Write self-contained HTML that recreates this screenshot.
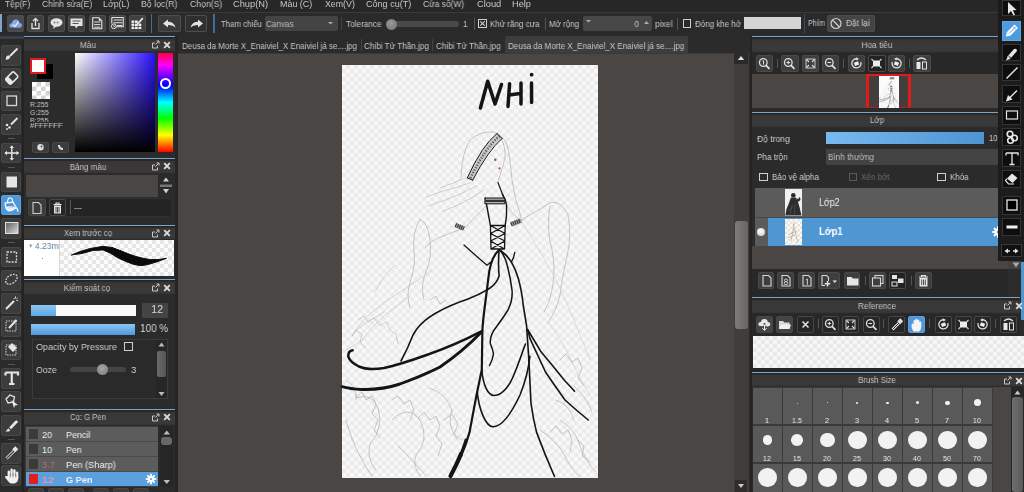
<!DOCTYPE html><html><head><meta charset="utf-8"><style>
html,body{margin:0;padding:0;width:1024px;height:492px;overflow:hidden;background:#2a2a2a;}
body{position:relative;font-family:"Liberation Sans",sans-serif;}
div{position:absolute;box-sizing:border-box;}
.t{white-space:nowrap;line-height:1;will-change:transform;}
svg{overflow:visible}
</style></head><body>
<div style="left:0px;top:0px;width:1024px;height:12px;background:#272727;"></div>
<div style="left:0px;top:12px;width:1000px;height:1px;background:#3a3a3a;"></div>
<div class="t" style="left:4.5px;top:0.25px;font-size:8.8px;color:#c8c8c8;transform:scaleX(0.9543);transform-origin:left center;">Tệp(F)</div>
<div class="t" style="left:41.6px;top:0.25px;font-size:8.8px;color:#c8c8c8;transform:scaleX(0.9571);transform-origin:left center;">Chỉnh sửa(E)</div>
<div class="t" style="left:103.19999999999999px;top:0.25px;font-size:8.8px;color:#c8c8c8;transform:scaleX(0.9957);transform-origin:left center;">Lớp(L)</div>
<div class="t" style="left:141.1px;top:0.25px;font-size:8.8px;color:#c8c8c8;transform:scaleX(0.9899);transform-origin:left center;">Bộ lọc(R)</div>
<div class="t" style="left:189.6px;top:0.25px;font-size:8.8px;color:#c8c8c8;transform:scaleX(0.9858);transform-origin:left center;">Chọn(S)</div>
<div class="t" style="left:233.4px;top:0.25px;font-size:8.8px;color:#c8c8c8;transform:scaleX(1.0526);transform-origin:left center;">Chụp(N)</div>
<div class="t" style="left:280.20000000000005px;top:0.25px;font-size:8.8px;color:#c8c8c8;transform:scaleX(1.0132);transform-origin:left center;">Màu (C)</div>
<div class="t" style="left:324.6px;top:0.25px;font-size:8.8px;color:#c8c8c8;transform:scaleX(0.9991);transform-origin:left center;">Xem(V)</div>
<div class="t" style="left:366.1px;top:0.25px;font-size:8.8px;color:#c8c8c8;transform:scaleX(1.0295);transform-origin:left center;">Công cụ(T)</div>
<div class="t" style="left:423.20000000000005px;top:0.25px;font-size:8.8px;color:#c8c8c8;transform:scaleX(0.9574);transform-origin:left center;">Cửa sổ(W)</div>
<div class="t" style="left:476.6px;top:0.25px;font-size:8.8px;color:#c8c8c8;transform:scaleX(1.0565);transform-origin:left center;">Cloud</div>
<div class="t" style="left:512.4px;top:0.25px;font-size:8.8px;color:#c8c8c8;transform:scaleX(1.0501);transform-origin:left center;">Help</div>
<div style="left:0px;top:13px;width:1000px;height:23px;background:#2a2a2a;"></div>
<div style="left:0px;top:14px;width:1.8px;height:18px;background:#7ea6cc;"></div>
<div style="left:7px;top:15px;width:17px;height:17px;background:#484a4e;border:1px solid #4e4e4e;border-radius:2px;"></div>
<div style="left:27px;top:15px;width:17px;height:17px;background:#404040;border:1px solid #4e4e4e;border-radius:2px;"></div>
<div style="left:47.5px;top:15px;width:17px;height:17px;background:#404040;border:1px solid #4e4e4e;border-radius:2px;"></div>
<div style="left:68px;top:15px;width:17px;height:17px;background:#404040;border:1px solid #4e4e4e;border-radius:2px;"></div>
<div style="left:88.5px;top:15px;width:17px;height:17px;background:#404040;border:1px solid #4e4e4e;border-radius:2px;"></div>
<div style="left:108.5px;top:15px;width:17px;height:17px;background:#404040;border:1px solid #4e4e4e;border-radius:2px;"></div>
<div style="left:129px;top:15px;width:17px;height:17px;background:#404040;border:1px solid #4e4e4e;border-radius:2px;"></div>
<svg style="position:absolute;left:7px;top:15px;" width="17" height="17" viewBox="0 0 17 17"><path d="M4 12.5 Q2 12.5 2.3 10 Q2.8 8 5 8.3 Q5.5 4.5 9 4.6 Q12.3 4.8 12.5 8 Q15.2 8 15 10.5 Q14.7 12.8 12.5 12.8 Z" fill="#7fa9e6"/><path d="M5.5 9.5 L7.8 11.5 L11.5 7" stroke="#dfe9f5" stroke-width="1.4" fill="none"/></svg>
<svg style="position:absolute;left:27px;top:15px;" width="17" height="17" viewBox="0 0 17 17"><path d="M5 8 V13.5 H12 V8" stroke="#e0e0e0" stroke-width="1.3" fill="none"/><path d="M8.5 11 V3.5 M6 6 L8.5 3.5 L11 6" stroke="#e0e0e0" stroke-width="1.3" fill="none"/></svg>
<svg style="position:absolute;left:47.5px;top:15px;" width="17" height="17" viewBox="0 0 17 17"><ellipse cx="8.5" cy="7.5" rx="6" ry="4.2" fill="#e4e4e4"/><path d="M6 10.5 L5 14 L9 11" fill="#e4e4e4"/><circle cx="6.5" cy="7.5" r="0.9" fill="#777"/><circle cx="9.5" cy="7.5" r="0.9" fill="#777"/></svg>
<svg style="position:absolute;left:68px;top:15px;" width="17" height="17" viewBox="0 0 17 17"><path d="M2.5 3.5 H14.5 V11 H10 L8 13.5 L7 11 H2.5 Z" fill="#e4e4e4"/><path d="M4.5 6 H12.5 M4.5 8.5 H10.5" stroke="#555" stroke-width="1"/></svg>
<svg style="position:absolute;left:88.5px;top:15px;" width="17" height="17" viewBox="0 0 17 17"><path d="M3.7 2.7 H9.8 L12.8 5.7 V13.7 H3.7 Z" fill="none" stroke="#e6e6e6" stroke-width="1.1"/><path d="M9.8 2.7 V5.7 H12.8" fill="#e6e6e6"/><path d="M5.2 7 H11.3 M5.2 9.6 H11.3 M5.2 12.2 H11.3" stroke="#e6e6e6" stroke-width="1"/></svg>
<svg style="position:absolute;left:108.5px;top:15px;" width="17" height="17" viewBox="0 0 17 17"><path d="M2.8 2.5 H14.2 V11.8 H7" fill="none" stroke="#e6e6e6" stroke-width="1.1"/><path d="M2.8 2.5 V8.5" stroke="#e6e6e6" stroke-width="1.1"/><path d="M4.5 5 H13 M4.5 7.8 H13 M8 10.5 H13" stroke="#e6e6e6" stroke-width="1.1"/><circle cx="4.8" cy="11.3" r="2.4" fill="#404040" stroke="#e6e6e6" stroke-width="1"/><path d="M4.8 10 V11.5 H6" stroke="#e6e6e6" stroke-width="0.7" fill="none"/></svg>
<svg style="position:absolute;left:129px;top:15px;" width="17" height="17" viewBox="0 0 17 17"><g fill="#eeeeee"><rect x="2.5" y="5.5" width="2.8" height="2.4"/><rect x="6" y="5.5" width="2.8" height="2.4"/><rect x="2.5" y="8.6" width="2.8" height="2.4"/><rect x="6" y="8.6" width="2.8" height="2.4"/><rect x="9.5" y="8.6" width="2.8" height="2.4"/><rect x="2.5" y="11.7" width="2.8" height="2.4"/><rect x="6" y="11.7" width="2.8" height="2.4"/><rect x="9.5" y="11.7" width="2.8" height="2.4"/></g><path d="M8.5 9 L13.8 3.2" stroke="#e6e6e6" stroke-width="1.8"/><path d="M8.5 9 L7.8 10.3" stroke="#e6e6e6" stroke-width="1"/></svg>
<div style="left:150.5px;top:14px;width:1.5px;height:19px;background:#3d6f9c;"></div>
<div style="left:158px;top:15px;width:22.5px;height:17px;background:#3a3a3a;border:1px solid #4e4e4e;border-radius:2px;"></div>
<div style="left:184.5px;top:15px;width:22.5px;height:17px;background:#2f2f2f;border:1px solid #4e4e4e;border-radius:2px;"></div>
<svg style="position:absolute;left:158px;top:15px;" width="23" height="17" viewBox="0 0 23 17"><path d="M5 8.5 L10 4.5 V6.8 Q16 6.8 17.5 12.5 Q15 9.8 10 10 V12.5 Z" fill="#e2e2e2"/></svg>
<svg style="position:absolute;left:184.5px;top:15px;" width="23" height="17" viewBox="0 0 23 17"><path d="M18 8.5 L13 4.5 V6.8 Q7 6.8 5.5 12.5 Q8 9.8 13 10 V12.5 Z" fill="#e2e2e2"/></svg>
<div style="left:213px;top:14px;width:1.5px;height:19px;background:#3d6f9c;"></div>
<div class="t" style="left:220.6px;top:19.55px;font-size:8.8px;color:#c8c8c8;transform:scaleX(0.8876);transform-origin:left center;">Tham chiếu</div>
<div style="left:265px;top:15.5px;width:72.5px;height:15.5px;background:#444444;border-radius:2px;"></div>
<div class="t" style="left:266.2px;top:19.55px;font-size:8.8px;color:#bdbdbd;transform:scaleX(0.9253);transform-origin:left center;">Canvas</div>
<svg style="position:absolute;left:327px;top:21px;" width="8" height="5" viewBox="0 0 8 5"><path d="M1 1 H6 L3.5 3.5 Z" fill="#aaa"/></svg>
<div style="left:340.5px;top:17px;width:1px;height:13px;background:#444;"></div>
<div class="t" style="left:345.8px;top:19.65px;font-size:8.8px;color:#c8c8c8;transform:scaleX(0.9330);transform-origin:left center;">Tolerance</div>
<div style="left:386px;top:21px;width:73px;height:6px;background:#4a4a4a;border-radius:3px;"></div>
<div style="left:385.5px;top:19px;width:11px;height:11px;border-radius:50%;background:radial-gradient(circle at 45% 40%,#9a9a9a,#6e6e6e);"></div>
<div class="t" style="left:463.2px;top:19.65px;font-size:8.8px;color:#c8c8c8;transform:scaleX(0.9000);transform-origin:left center;">1</div>
<div style="left:473.5px;top:18px;width:1px;height:12px;background:#555;"></div>
<div style="left:477.5px;top:19px;width:9px;height:9px;border:1px solid #cfcfcf;"></div>
<svg style="position:absolute;left:477.5px;top:19px;" width="9" height="9" viewBox="0 0 9 9"><path d="M2.3 2.3 L6.7 6.7 M6.7 2.3 L2.3 6.7" stroke="#cfcfcf" stroke-width="1.1"/></svg>
<div class="t" style="left:490.1px;top:19.55px;font-size:8.8px;color:#c8c8c8;transform:scaleX(0.9111);transform-origin:left center;">Khử răng cưa</div>
<div style="left:544.5px;top:18px;width:1px;height:12px;background:#555;"></div>
<div class="t" style="left:549.3px;top:19.55px;font-size:8.8px;color:#c8c8c8;transform:scaleX(0.9078);transform-origin:left center;">Mở rộng</div>
<div style="left:583px;top:15.5px;width:69px;height:15.5px;background:#474747;border-radius:2px;"></div>
<svg style="position:absolute;left:585px;top:19px;" width="8" height="5" viewBox="0 0 8 5"><path d="M1 1 H6 L3.5 3.5 Z" fill="#aaa"/></svg>
<div class="t" style="left:238.5px;width:400px;text-align:right;top:19.55px;font-size:8.8px;color:#c8c8c8;transform:scaleX(0.9000);transform-origin:right center;">0</div>
<svg style="position:absolute;left:643px;top:20px;" width="8" height="5" viewBox="0 0 8 5"><path d="M1 4 H6 L3.5 1 Z" fill="#aaa"/></svg>
<div class="t" style="left:654.8px;top:19.55px;font-size:8.8px;color:#c8c8c8;transform:scaleX(0.9672);transform-origin:left center;">pixel</div>
<div style="left:677px;top:18px;width:1px;height:12px;background:#555;"></div>
<div style="left:682.5px;top:19px;width:8.5px;height:9px;border:1px solid #cfcfcf;"></div>
<div class="t" style="left:695.3px;top:19.55px;font-size:8.8px;color:#c8c8c8;transform:scaleX(0.9081);transform-origin:left center;">Đóng khe hở</div>
<div style="left:743.5px;top:17px;width:57px;height:12px;background:#d4d4d4;"></div>
<div style="left:803.5px;top:14px;width:1.5px;height:19px;background:#3a4d60;"></div>
<div class="t" style="left:808.4px;top:19.35px;font-size:8.8px;color:#c8c8c8;transform:scaleX(0.8274);transform-origin:left center;">Phím</div>
<div style="left:827px;top:15px;width:48px;height:17px;background:#444444;border:1px solid #4c4c4c;border-radius:2px;"></div>
<svg style="position:absolute;left:829px;top:16px;" width="14" height="14" viewBox="0 0 14 14"><circle cx="7" cy="7.5" r="5" fill="none" stroke="#cfcfcf" stroke-width="1.2"/><path d="M3.5 4 L10.5 11" stroke="#cfcfcf" stroke-width="1.2"/></svg>
<div class="t" style="left:846.2px;top:19.35px;font-size:8.8px;color:#c8c8c8;transform:scaleX(0.9464);transform-origin:left center;">Đặt lại</div>
<div style="left:0px;top:36px;width:23px;height:456px;background:#2a2a2a;"></div>
<div style="left:21.5px;top:36px;width:2.5px;height:456px;background:#232323;"></div>
<div style="left:0px;top:35.5px;width:23.5px;height:3.5px;background:#36404a;"></div>
<div style="left:1px;top:45px;width:20.3px;height:20.5px;background:#3c3c3c;border:1px solid #474747;border-radius:2px;"></div>
<div style="left:1px;top:67.5px;width:20.3px;height:20.5px;background:#3c3c3c;border:1px solid #474747;border-radius:2px;"></div>
<div style="left:1px;top:90.5px;width:20.3px;height:20.5px;background:#3c3c3c;border:1px solid #474747;border-radius:2px;"></div>
<div style="left:1px;top:114px;width:20.3px;height:20.5px;background:#3c3c3c;border:1px solid #474747;border-radius:2px;"></div>
<div style="left:1px;top:142.5px;width:20.3px;height:20.5px;background:#3c3c3c;border:1px solid #474747;border-radius:2px;"></div>
<div style="left:1px;top:171.7px;width:20.3px;height:20.5px;background:#3c3c3c;border:1px solid #474747;border-radius:2px;"></div>
<div style="left:1px;top:194.6px;width:20.3px;height:20.5px;background:#4f97d6;border:1px solid #5aa0dc;border-radius:2px;"></div>
<div style="left:1px;top:218px;width:20.3px;height:20.5px;background:#3c3c3c;border:1px solid #474747;border-radius:2px;"></div>
<div style="left:1px;top:246.5px;width:20.3px;height:20.5px;background:#3c3c3c;border:1px solid #474747;border-radius:2px;"></div>
<div style="left:1px;top:270px;width:20.3px;height:20.5px;background:#3c3c3c;border:1px solid #474747;border-radius:2px;"></div>
<div style="left:1px;top:293px;width:20.3px;height:20.5px;background:#3c3c3c;border:1px solid #474747;border-radius:2px;"></div>
<div style="left:1px;top:316px;width:20.3px;height:20.5px;background:#3c3c3c;border:1px solid #474747;border-radius:2px;"></div>
<div style="left:1px;top:339.5px;width:20.3px;height:20.5px;background:#3c3c3c;border:1px solid #474747;border-radius:2px;"></div>
<div style="left:1px;top:368px;width:20.3px;height:20.5px;background:#3c3c3c;border:1px solid #474747;border-radius:2px;"></div>
<div style="left:1px;top:391.3px;width:20.3px;height:20.5px;background:#3c3c3c;border:1px solid #474747;border-radius:2px;"></div>
<div style="left:1px;top:415px;width:20.3px;height:20.5px;background:#3c3c3c;border:1px solid #474747;border-radius:2px;"></div>
<div style="left:1px;top:443px;width:20.3px;height:20.5px;background:#3c3c3c;border:1px solid #474747;border-radius:2px;"></div>
<div style="left:1px;top:465.4px;width:20.3px;height:20.5px;background:#3c3c3c;border:1px solid #474747;border-radius:2px;"></div>
<div style="left:8px;top:138px;width:7px;height:1px;background:#555;"></div>
<div style="left:8px;top:167px;width:7px;height:1px;background:#555;"></div>
<div style="left:8px;top:241.5px;width:7px;height:1px;background:#555;"></div>
<div style="left:8px;top:364px;width:7px;height:1px;background:#555;"></div>
<div style="left:8px;top:439px;width:7px;height:1px;background:#555;"></div>
<svg style="position:absolute;left:1.7px;top:45px;" width="19" height="20" viewBox="0 0 19 20"><path d="M15.5 3.5 L8 11" stroke="#e6e6e6" stroke-width="1.8"/><path d="M4 13.5 Q4 10 7 10.5 Q9 11.5 7.5 13.5 Q6 15 3.5 14.5 Z" fill="#e6e6e6"/></svg>
<svg style="position:absolute;left:1.7px;top:67.5px;" width="19" height="20" viewBox="0 0 19 20"><g transform="rotate(-45 9.75 10)"><rect x="4" y="6.3" width="11.5" height="7.4" rx="1.5" fill="none" stroke="#e6e6e6" stroke-width="1.5"/><rect x="4" y="6.3" width="4.2" height="7.4" rx="1" fill="#e6e6e6"/></g></svg>
<svg style="position:absolute;left:1.7px;top:90.5px;" width="19" height="20" viewBox="0 0 19 20"><rect x="5" y="5" width="9.5" height="9.5" fill="none" stroke="#d8d8d8" stroke-width="1.3"/></svg>
<svg style="position:absolute;left:1.7px;top:114px;" width="19" height="20" viewBox="0 0 19 20"><path d="M15.5 4 L9 10.5" stroke="#e6e6e6" stroke-width="1.8"/><circle cx="5" cy="11" r="1.3" fill="#e6e6e6"/><circle cx="7.5" cy="13.5" r="1.3" fill="#e6e6e6"/><circle cx="5" cy="15" r="0.9" fill="#e6e6e6"/></svg>
<svg style="position:absolute;left:1.7px;top:142.5px;" width="19" height="20" viewBox="0 0 19 20"><path d="M9.75 3 V17 M3 10 H16.5" stroke="#e6e6e6" stroke-width="1.4"/><path d="M9.75 2.5 L7.5 5 H12 Z M9.75 17.5 L7.5 15 H12 Z M2.5 10 L5 7.8 V12.2 Z M17 10 L14.5 7.8 V12.2 Z" fill="#e6e6e6"/></svg>
<svg style="position:absolute;left:1.7px;top:171.7px;" width="19" height="20" viewBox="0 0 19 20"><rect x="4.5" y="4.5" width="10.5" height="11" fill="#e6e6e6"/></svg>
<svg style="position:absolute;left:1.7px;top:194.6px;" width="19" height="20" viewBox="0 0 19 20"><path d="M5.5 7.5 Q5.5 2.5 8.5 3 Q11 3.5 10.5 7.5" stroke="#f2f8ff" stroke-width="1.2" fill="none"/><path d="M3.2 8 L11 7.2 L14.3 12.8 Q10.5 15.8 6.5 15.8 Q3.3 14.5 3.2 8 Z" fill="none" stroke="#f2f8ff" stroke-width="1.3"/><path d="M3.8 11.8 Q9 10.6 13.6 12.6 Q10.5 15.2 6.5 15.2 Q4 14.2 3.8 11.8 Z" fill="#f2f8ff"/><path d="M6 13.2 Q8.5 12.4 11 12.8" stroke="#f0b0b0" stroke-width="0.8" fill="none"/><path d="M14.3 12.8 Q16.2 14.2 15.6 16.5" stroke="#f2f8ff" stroke-width="1.4" fill="none"/></svg>
<svg style="position:absolute;left:1.7px;top:218px;" width="19" height="20" viewBox="0 0 19 20"><defs><linearGradient id="lg1" x1="0" y1="0" x2="1" y2="1"><stop offset="0" stop-color="#5a5a5a"/><stop offset="1" stop-color="#dcdcdc"/></linearGradient></defs><rect x="3.5" y="4.5" width="12.5" height="11" fill="url(#lg1)" stroke="#e0e0e0" stroke-width="1"/></svg>
<svg style="position:absolute;left:1.7px;top:246.5px;" width="19" height="20" viewBox="0 0 19 20"><rect x="5" y="5" width="9.5" height="10" fill="none" stroke="#d8d8d8" stroke-width="1.3" stroke-dasharray="2 1.2"/></svg>
<svg style="position:absolute;left:1.7px;top:270px;" width="19" height="20" viewBox="0 0 19 20"><path d="M4 13 Q3 8 8 5.5 Q13 3 15 6 Q16 10 11 13 Q7 15.5 4 13 Z" fill="none" stroke="#d8d8d8" stroke-width="1.3" stroke-dasharray="1.8 1.2"/></svg>
<svg style="position:absolute;left:1.7px;top:293px;" width="19" height="20" viewBox="0 0 19 20"><path d="M4 16 L12 8" stroke="#e6e6e6" stroke-width="2"/><path d="M13.5 3.5 V5.5 M15.5 5 L14.3 6 M16 7.5 H14.5 M11.5 5 L12.5 6" stroke="#e6e6e6" stroke-width="1"/></svg>
<svg style="position:absolute;left:1.7px;top:316px;" width="19" height="20" viewBox="0 0 19 20"><rect x="4" y="5" width="10" height="10" fill="none" stroke="#cfcfcf" stroke-width="1" stroke-dasharray="1.5 1"/><path d="M7 12 L14.5 4" stroke="#e6e6e6" stroke-width="2"/></svg>
<svg style="position:absolute;left:1.7px;top:339.5px;" width="19" height="20" viewBox="0 0 19 20"><rect x="4" y="5" width="10" height="10" fill="none" stroke="#cfcfcf" stroke-width="1" stroke-dasharray="1.5 1"/><path d="M10 3 L15 8 L11 12 L6 7 Z" fill="#e6e6e6"/></svg>
<svg style="position:absolute;left:1.7px;top:368px;" width="19" height="20" viewBox="0 0 19 20"><path d="M3.5 4.5 H16 V7.5 M3.5 4.5 V7.5 M9.75 4.5 V16 M7 16 H12.5" stroke="#e6e6e6" stroke-width="2.2" fill="none"/></svg>
<svg style="position:absolute;left:1.7px;top:391.3px;" width="19" height="20" viewBox="0 0 19 20"><path d="M4 8 L8 4 L12.5 6 L11.5 11 L6 12 Z" fill="none" stroke="#e6e6e6" stroke-width="1.3"/><path d="M9.5 9 L16 14 L13 14.5 L12 17 Z" fill="#e6e6e6"/></svg>
<svg style="position:absolute;left:1.7px;top:415px;" width="19" height="20" viewBox="0 0 19 20"><path d="M3.5 16.5 L13 6 Q15.5 4.5 16 7 L7 16.5 Z" fill="#e6e6e6"/><path d="M6.5 12.8 L9.2 15" stroke="#3c3c3c" stroke-width="1.1"/></svg>
<svg style="position:absolute;left:1.7px;top:443px;" width="19" height="20" viewBox="0 0 19 20"><path d="M4.5 15.5 L12 8" stroke="#e6e6e6" stroke-width="3"/><path d="M4.5 15.5 L12 8" stroke="#3c3c3c" stroke-width="1.2"/><path d="M11 5.5 L14 8.5 M12.5 4 L15.5 7" stroke="#e6e6e6" stroke-width="2.2"/></svg>
<svg style="position:absolute;left:1.7px;top:465.4px;" width="19" height="20" viewBox="0 0 19 20"><g fill="#f0f0f0"><rect x="5.6" y="5.5" width="2.4" height="8" rx="1.2"/><rect x="8.4" y="3.6" width="2.4" height="9" rx="1.2"/><rect x="11.2" y="4.2" width="2.4" height="9" rx="1.2"/><rect x="14" y="6.5" width="2.3" height="7" rx="1.15"/><path d="M5.6 11 H16.3 V13.5 Q16 17.5 12.5 18.5 H9.5 Q7 18 5.5 15.5 L2.8 12 Q3.3 10.3 5 11.2 Z"/></g><path d="M8.2 9 V12.5 M11 8 V12.5 M13.8 9 V12.5" stroke="#3c3c3c" stroke-width="0.5"/></svg>
<div style="left:24px;top:36px;width:150.8px;height:456px;background:#2b2b2b;"></div>
<div style="left:174.8px;top:36px;width:3.2px;height:456px;background:#252525;"></div>
<div style="left:24px;top:37px;width:150.8px;height:15px;background:linear-gradient(to bottom,#23262b 0,#23262b 8%,#3d3632 18%,#3b3734 35%,#383a3c 60%,#3a3836 88%,#25252c 100%);"></div>
<div style="left:24px;top:36px;width:150.8px;height:1.2px;background:#7ea3c4;"></div>
<div class="t" style="left:-112.45px;width:400px;text-align:center;top:40.55px;font-size:8.8px;color:#c4c4c4;transform:scaleX(0.9401);transform-origin:center center;">Màu</div>
<svg style="position:absolute;left:151.3px;top:40px;" width="9" height="9" viewBox="0 0 9 9"><path d="M1.5 3 V8 H6.5 V5.5 M1.5 3 H4" stroke="#c8c8c8" stroke-width="1" fill="none"/><path d="M4.5 4.5 L8 1 M5.5 1 H8 V3.5" stroke="#c8c8c8" stroke-width="1" fill="none"/></svg>
<svg style="position:absolute;left:163.3px;top:40.5px;" width="8" height="8" viewBox="0 0 8 8"><path d="M1.2 1.2 L6.8 6.8 M6.8 1.2 L1.2 6.8" stroke="#dcdcdc" stroke-width="1.9"/></svg>
<div style="left:24px;top:52px;width:150.8px;height:105.5px;background:#2b2b2b;"></div>
<div style="left:75px;top:53px;width:80px;height:99px;background:linear-gradient(to bottom,rgba(0,0,0,0),#000),linear-gradient(to right,#fff,#2a12ff);"></div>
<svg style="position:absolute;left:74px;top:52px;" width="8" height="8" viewBox="0 0 8 8"><path d="M1.5 6.5 Q2 2 6.5 1.5" stroke="#eee" stroke-width="1" fill="none"/></svg>
<div style="left:157.5px;top:53px;width:15.3px;height:99px;background:linear-gradient(to bottom,#ff0040 0%,#ff00ff 12%,#8000ff 22%,#0000ff 33%,#00ffff 50%,#00ff00 66%,#ffff00 83%,#ff0000 100%);"></div>
<div style="left:159.7px;top:77.5px;width:11px;height:11px;border-radius:50%;border:2px solid #fff;"></div>
<div style="left:37px;top:63.5px;width:16px;height:15.5px;background:#000;"></div>
<div style="left:30px;top:58px;width:16px;height:15.5px;background:#fff;border:2px solid #e21a1a;"></div>
<div style="left:32px;top:82px;width:18px;height:17px;background-color:#fff;background-image:linear-gradient(45deg,#d0d0d0 25%,transparent 25%,transparent 75%,#d0d0d0 75%),linear-gradient(45deg,#d0d0d0 25%,transparent 25%,transparent 75%,#d0d0d0 75%);background-size:9px 9px;background-position:0 0,4.5px 4.5px;"></div>
<div class="t" style="left:30.1px;top:100.90px;font-size:8.03px;color:#c8c8c8;transform:scaleX(0.8649);transform-origin:left center;">R:255</div>
<div class="t" style="left:30.1px;top:109.00px;font-size:8.03px;color:#c8c8c8;transform:scaleX(0.8561);transform-origin:left center;">G:255</div>
<div class="t" style="left:30.1px;top:116.70px;font-size:8.03px;color:#c8c8c8;transform:scaleX(0.8829);transform-origin:left center;">B:255</div>
<div style="left:29px;top:122px;width:45px;height:3px;background:#2b2b2b;"></div>
<div class="t" style="left:30.1px;top:122.00px;font-size:8.03px;color:#c8c8c8;transform:scaleX(0.9603);transform-origin:left center;">#FFFFFF</div>
<div style="left:32px;top:142px;width:17px;height:10.5px;background:#3c3c3c;border:1px solid #474747;border-radius:2px;"></div>
<div style="left:52px;top:142px;width:17px;height:10.5px;background:#3c3c3c;border:1px solid #474747;border-radius:2px;"></div>
<svg style="position:absolute;left:32px;top:142px;" width="17" height="10.5" viewBox="0 0 17 10.5"><circle cx="8.5" cy="5.3" r="3.2" fill="#ddd"/><circle cx="9.5" cy="4.5" r="0.9" fill="#444"/></svg>
<svg style="position:absolute;left:52px;top:142px;" width="17" height="10.5" viewBox="0 0 17 10.5"><path d="M6 3 Q6 8 11 8 L11 6 Q8 6 8 3 Z" fill="#ddd"/></svg>
<div style="left:24px;top:158.5px;width:150.8px;height:15.5px;background:linear-gradient(to bottom,#23262b 0,#23262b 8%,#3d3632 18%,#3b3734 35%,#383a3c 60%,#3a3836 88%,#25252c 100%);"></div>
<div style="left:24px;top:157.5px;width:150.8px;height:1.2px;background:#7ea3c4;"></div>
<div class="t" style="left:-112.15px;width:400px;text-align:center;top:162.65px;font-size:8.8px;color:#c4c4c4;transform:scaleX(0.9100);transform-origin:center center;">Bảng màu</div>
<svg style="position:absolute;left:151.3px;top:161.5px;" width="9" height="9" viewBox="0 0 9 9"><path d="M1.5 3 V8 H6.5 V5.5 M1.5 3 H4" stroke="#c8c8c8" stroke-width="1" fill="none"/><path d="M4.5 4.5 L8 1 M5.5 1 H8 V3.5" stroke="#c8c8c8" stroke-width="1" fill="none"/></svg>
<svg style="position:absolute;left:163.3px;top:162.0px;" width="8" height="8" viewBox="0 0 8 8"><path d="M1.2 1.2 L6.8 6.8 M6.8 1.2 L1.2 6.8" stroke="#dcdcdc" stroke-width="1.9"/></svg>
<div style="left:24px;top:174px;width:150.8px;height:51px;background:#2b2b2b;"></div>
<div style="left:25.5px;top:174.5px;width:132.5px;height:22px;background:#4a4644;"></div>
<svg style="position:absolute;left:159px;top:175px;" width="14" height="22" viewBox="0 0 14 22"><path d="M4 6.5 L7 2.5 L10 6.5 Z" fill="#cfcfcf"/><rect x="1" y="9.5" width="12" height="2.5" fill="#777"/><path d="M4 14 L10 14 L7 18.5 Z" fill="#cfcfcf"/></svg>
<div style="left:25.5px;top:197.5px;width:146px;height:19px;background:#242424;border:1px solid #303030;"></div>
<div style="left:28px;top:198.5px;width:17.5px;height:17.5px;background:#3c3c3c;border:1px solid #474747;border-radius:2px;"></div>
<div style="left:49px;top:198.5px;width:17px;height:17.5px;background:#262626;border:1px solid #474747;border-radius:2px;"></div>
<svg style="position:absolute;left:28px;top:198.5px;" width="18" height="18" viewBox="0 0 18 18"><path d="M5 3.5 H10.5 L13 6 V14.5 H5 Z" fill="none" stroke="#cfcfcf" stroke-width="1.1"/></svg>
<svg style="position:absolute;left:49px;top:198.5px;" width="17" height="18" viewBox="0 0 17 18"><path d="M4.5 5.5 H12.5 M7 5.5 V4 H10 V5.5" stroke="#e6e6e6" stroke-width="1.1" fill="none"/><rect x="5" y="6.5" width="7" height="8" fill="#e6e6e6"/><path d="M7 8 V13.5 M8.5 8 V13.5 M10 8 V13.5" stroke="#262626" stroke-width="0.8"/></svg>
<div style="left:70px;top:200px;width:1px;height:14px;background:#555;"></div>
<div class="t" style="left:74px;top:203.85px;font-size:8.8px;color:#cfcfcf;transform:scaleX(0.9000);transform-origin:left center;">---</div>
<div style="left:24px;top:225.5px;width:150.8px;height:14.5px;background:linear-gradient(to bottom,#23262b 0,#23262b 8%,#3d3632 18%,#3b3734 35%,#383a3c 60%,#3a3836 88%,#25252c 100%);"></div>
<div style="left:24px;top:224.5px;width:150.8px;height:1.2px;background:#7ea3c4;"></div>
<div class="t" style="left:-112.15px;width:400px;text-align:center;top:229.15px;font-size:8.8px;color:#c4c4c4;transform:scaleX(0.8994);transform-origin:center center;">Xem trước cọ</div>
<svg style="position:absolute;left:151.3px;top:228.5px;" width="9" height="9" viewBox="0 0 9 9"><path d="M1.5 3 V8 H6.5 V5.5 M1.5 3 H4" stroke="#c8c8c8" stroke-width="1" fill="none"/><path d="M4.5 4.5 L8 1 M5.5 1 H8 V3.5" stroke="#c8c8c8" stroke-width="1" fill="none"/></svg>
<svg style="position:absolute;left:163.3px;top:229.0px;" width="8" height="8" viewBox="0 0 8 8"><path d="M1.2 1.2 L6.8 6.8 M6.8 1.2 L1.2 6.8" stroke="#dcdcdc" stroke-width="1.9"/></svg>
<div style="left:24px;top:240px;width:35px;height:35.5px;background:#fff;"></div>
<div class="t" style="left:28.5px;top:243.21px;font-size:6.6px;color:#8a9aaa;transform:scaleX(0.9000);transform-origin:left center;">▾</div>
<div class="t" style="left:34.5px;top:241.79px;font-size:9.35px;color:#5d7d9e;transform:scaleX(0.9000);transform-origin:left center;">4.23mm</div>
<div style="left:42px;top:257.5px;width:1px;height:1px;background:#888;"></div>
<div style="left:58.7px;top:240px;width:115.8px;height:35.5px;background-color:#fbfbfb;border-left:1px solid #d8d8d8;background-image:linear-gradient(45deg,#e6e6e6 25%,transparent 25%,transparent 75%,#e6e6e6 75%),linear-gradient(45deg,#e6e6e6 25%,transparent 25%,transparent 75%,#e6e6e6 75%);background-size:8px 8px;background-position:0 0,4px 4px;"></div>
<svg style="position:absolute;left:60px;top:244px;" width="115" height="30" viewBox="0 0 115 30"><path d="M11.3 11 L20 7.5 L30 4.5 L43 2.3 L52 3.5 L60 6.5 L68 9.8 L76 12.5 L82 14 L90 15.5 L98 15.5 L106.5 14.3 L98 17.5 L90 20 L82 21.7 L74 20.5 L66 17.5 L58 14 L50 9 L43 6 L33 6.5 L22 9.5 Z" fill="#0a0a0a" stroke="#0a0a0a" stroke-width="0.9" stroke-linejoin="round"/><path d="M52 4 L60 7 L68 10.5 L76 13.5 L84 15.5" stroke="#0a0a0a" stroke-width="2" stroke-dasharray="1.2 1.6" fill="none"/><path d="M62 15 L70 18.5 L80 21.5" stroke="#0a0a0a" stroke-width="1.6" stroke-dasharray="1.4 1.4" fill="none"/></svg>
<div style="left:24px;top:275.5px;width:150.5px;height:3.5px;background:#2b2b2b;"></div>
<div style="left:24px;top:280px;width:150.8px;height:15px;background:linear-gradient(to bottom,#23262b 0,#23262b 8%,#3d3632 18%,#3b3734 35%,#383a3c 60%,#3a3836 88%,#25252c 100%);"></div>
<div style="left:24px;top:279px;width:150.8px;height:1.2px;background:#7ea3c4;"></div>
<div class="t" style="left:-112.55px;width:400px;text-align:center;top:283.75px;font-size:8.8px;color:#c4c4c4;transform:scaleX(0.9104);transform-origin:center center;">Kiểm soát cọ</div>
<svg style="position:absolute;left:151.3px;top:283px;" width="9" height="9" viewBox="0 0 9 9"><path d="M1.5 3 V8 H6.5 V5.5 M1.5 3 H4" stroke="#c8c8c8" stroke-width="1" fill="none"/><path d="M4.5 4.5 L8 1 M5.5 1 H8 V3.5" stroke="#c8c8c8" stroke-width="1" fill="none"/></svg>
<svg style="position:absolute;left:163.3px;top:283.5px;" width="8" height="8" viewBox="0 0 8 8"><path d="M1.2 1.2 L6.8 6.8 M6.8 1.2 L1.2 6.8" stroke="#dcdcdc" stroke-width="1.9"/></svg>
<div style="left:24px;top:295px;width:150.8px;height:109px;background:#2b2b2b;"></div>
<div style="left:31px;top:304.5px;width:105px;height:11px;background:#fafafa;"></div>
<div style="left:31px;top:304.5px;width:24.5px;height:11px;background:linear-gradient(to bottom,#8cc6f2,#5aa7e6);"></div>
<div style="left:142px;top:302.5px;width:25.5px;height:15.5px;background:#444444;border-radius:1px;"></div>
<div class="t" style="left:-236.9px;width:400px;text-align:right;top:305.15px;font-size:10.45px;color:#d8d8d8;transform:scaleX(1.0065);transform-origin:right center;">12</div>
<div style="left:31px;top:323.5px;width:104px;height:11px;background:linear-gradient(to bottom,#8cc6f2,#4c98d8);"></div>
<div class="t" style="left:-232.4px;width:400px;text-align:right;top:323.74px;font-size:10.23px;color:#d8d8d8;transform:scaleX(0.9626);transform-origin:right center;">100 %</div>
<div style="left:32px;top:339px;width:136px;height:60px;background:#2a2a2a;border:1px solid #3c3c3c;"></div>
<div class="t" style="left:36.4px;top:342.11px;font-size:9.68px;color:#cfcfcf;transform:scaleX(0.9289);transform-origin:left center;">Opacity by Pressure</div>
<div style="left:123.5px;top:342px;width:9px;height:8.5px;border:1px solid #cfcfcf;"></div>
<div style="left:156px;top:340px;width:10.5px;height:58px;background:#262626;"></div>
<svg style="position:absolute;left:156px;top:340px;" width="11" height="8" viewBox="0 0 11 8"><path d="M2.5 6.5 L5.5 2.5 L8.5 6.5 Z" fill="#bbb"/></svg>
<div style="left:157px;top:351px;width:9px;height:25.5px;background:linear-gradient(to right,#6a6a6a,#565656);border-radius:2px;"></div>
<svg style="position:absolute;left:156px;top:390px;" width="11" height="8" viewBox="0 0 11 8"><path d="M2.5 2 L5.5 6 L8.5 2 Z" fill="#bbb"/></svg>
<div class="t" style="left:36.4px;top:365.01px;font-size:9.68px;color:#cfcfcf;transform:scaleX(0.8951);transform-origin:left center;">Ooze</div>
<div style="left:69.5px;top:366.5px;width:56.5px;height:5px;background:#454545;border-radius:2.5px;"></div>
<div style="left:97px;top:363.5px;width:11px;height:11px;border-radius:50%;background:radial-gradient(circle at 45% 40%,#a5a5a5,#7c7c7c);"></div>
<div class="t" style="left:131.4px;top:365.01px;font-size:9.68px;color:#cfcfcf;transform:scaleX(0.9832);transform-origin:left center;">3</div>
<div style="left:24px;top:409.5px;width:150.8px;height:16px;background:linear-gradient(to bottom,#23262b 0,#23262b 8%,#3d3632 18%,#3b3734 35%,#383a3c 60%,#3a3836 88%,#25252c 100%);"></div>
<div style="left:24px;top:408.5px;width:150.8px;height:1.2px;background:#7ea3c4;"></div>
<div class="t" style="left:-112.45px;width:400px;text-align:center;top:413.45px;font-size:8.8px;color:#c4c4c4;transform:scaleX(0.8739);transform-origin:center center;">Cọ: G Pen</div>
<svg style="position:absolute;left:151.3px;top:412.5px;" width="9" height="9" viewBox="0 0 9 9"><path d="M1.5 3 V8 H6.5 V5.5 M1.5 3 H4" stroke="#c8c8c8" stroke-width="1" fill="none"/><path d="M4.5 4.5 L8 1 M5.5 1 H8 V3.5" stroke="#c8c8c8" stroke-width="1" fill="none"/></svg>
<svg style="position:absolute;left:163.3px;top:413.0px;" width="8" height="8" viewBox="0 0 8 8"><path d="M1.2 1.2 L6.8 6.8 M6.8 1.2 L1.2 6.8" stroke="#dcdcdc" stroke-width="1.9"/></svg>
<div style="left:24px;top:425.5px;width:150.8px;height:67px;background:#2b2b2b;"></div>
<div style="left:25px;top:426px;width:133px;height:60.5px;background:#3c3c3c;"></div>
<div style="left:25.5px;top:427px;width:132px;height:14.5px;background:#5c5c5c;"></div>
<div style="left:25.5px;top:441px;width:132px;height:1px;background:#4a4a4a;"></div>
<div style="left:28.5px;top:429px;width:9.5px;height:10px;background:#3a3a3a;"></div>
<div class="t" style="left:42.2px;top:430.40px;font-size:9.57px;color:#f0f0f0;transform:scaleX(0.9586);transform-origin:left center;">20</div>
<div class="t" style="left:66.2px;top:430.40px;font-size:9.57px;color:#f2f2f2;transform:scaleX(0.9329);transform-origin:left center;">Pencil</div>
<div style="left:25.5px;top:442px;width:132px;height:14.5px;background:#5c5c5c;"></div>
<div style="left:25.5px;top:456px;width:132px;height:1px;background:#4a4a4a;"></div>
<div style="left:28.5px;top:444px;width:9.5px;height:10px;background:#3a3a3a;"></div>
<div class="t" style="left:42.2px;top:445.40px;font-size:9.57px;color:#f0f0f0;transform:scaleX(0.9586);transform-origin:left center;">10</div>
<div class="t" style="left:66.2px;top:445.40px;font-size:9.57px;color:#f2f2f2;transform:scaleX(0.9109);transform-origin:left center;">Pen</div>
<div style="left:25.5px;top:457px;width:132px;height:14.5px;background:#5c5c5c;"></div>
<div style="left:25.5px;top:471px;width:132px;height:1px;background:#4a4a4a;"></div>
<div style="left:28.5px;top:459px;width:9.5px;height:10px;background:#3a3a3a;"></div>
<div class="t" style="left:42.2px;top:460.40px;font-size:9.57px;color:#c06a78;transform:scaleX(0.9852);transform-origin:left center;">3.7</div>
<div class="t" style="left:66.2px;top:460.40px;font-size:9.57px;color:#f2f2f2;transform:scaleX(0.9678);transform-origin:left center;">Pen (Sharp)</div>
<div style="left:25.5px;top:471.8px;width:132px;height:14px;background:#5aa0de;"></div>
<div style="left:28.5px;top:473.8px;width:9.5px;height:10px;background:#e21f1f;"></div>
<div class="t" style="left:42.2px;top:475.20px;font-size:9.57px;color:#d996b8;transform:scaleX(1.1653);transform-origin:left center;font-weight:bold;">12</div>
<div class="t" style="left:66.2px;top:475.20px;font-size:9.57px;color:#f2f2f2;transform:scaleX(0.9624);transform-origin:left center;font-weight:bold;">G Pen</div>
<svg style="position:absolute;left:145px;top:473px;" width="12" height="12" viewBox="0 0 12 12"><g fill="#fff"><circle cx="6" cy="6" r="3.2"/><rect x="5.1" y="0.8" width="1.8" height="3" transform="rotate(0 6 6)"/><rect x="5.1" y="0.8" width="1.8" height="3" transform="rotate(45 6 6)"/><rect x="5.1" y="0.8" width="1.8" height="3" transform="rotate(90 6 6)"/><rect x="5.1" y="0.8" width="1.8" height="3" transform="rotate(135 6 6)"/><rect x="5.1" y="0.8" width="1.8" height="3" transform="rotate(180 6 6)"/><rect x="5.1" y="0.8" width="1.8" height="3" transform="rotate(225 6 6)"/><rect x="5.1" y="0.8" width="1.8" height="3" transform="rotate(270 6 6)"/><rect x="5.1" y="0.8" width="1.8" height="3" transform="rotate(315 6 6)"/></g><circle cx="6" cy="6" r="1.1" fill="#5aa0de"/></svg>
<div style="left:159.5px;top:426px;width:13.5px;height:61px;background:#262626;"></div>
<svg style="position:absolute;left:159.5px;top:428px;" width="14" height="8" viewBox="0 0 14 8"><path d="M3.5 6.5 L6.75 2.5 L10 6.5 Z" fill="#bbb"/></svg>
<div style="left:160.5px;top:437px;width:11.5px;height:8px;background:#686868;border-radius:3px;"></div>
<svg style="position:absolute;left:159.5px;top:478px;" width="14" height="8" viewBox="0 0 14 8"><path d="M3.5 2 L6.75 6 L10 2 Z" fill="#bbb"/></svg>
<div style="left:28px;top:487.5px;width:16px;height:5px;background:#3c3c3c;border:1px solid #474747;border-radius:2px;"></div>
<div style="left:48px;top:487.5px;width:16px;height:5px;background:#3c3c3c;border:1px solid #474747;border-radius:2px;"></div>
<div style="left:68px;top:487.5px;width:16px;height:5px;background:#3c3c3c;border:1px solid #474747;border-radius:2px;"></div>
<div style="left:93px;top:487.5px;width:16px;height:5px;background:#3c3c3c;border:1px solid #474747;border-radius:2px;"></div>
<div style="left:113px;top:487.5px;width:16px;height:5px;background:#3c3c3c;border:1px solid #474747;border-radius:2px;"></div>
<div style="left:133px;top:487.5px;width:16px;height:5px;background:#3c3c3c;border:1px solid #474747;border-radius:2px;"></div>
<div style="left:176.5px;top:36px;width:575.5px;height:18px;background:#2b2b2b;"></div>
<div style="left:176.5px;top:53px;width:575.5px;height:1px;background:#3a3a3a;"></div>
<div style="left:176.5px;top:54px;width:575.5px;height:438px;background:#4a4644;"></div>
<div style="left:174.8px;top:36px;width:3.2px;height:456px;background:#252525;"></div>
<div class="t" style="left:181.5px;top:41.65px;font-size:8.8px;color:#c8c8c8;transform:scaleX(0.9055);transform-origin:left center;">Deusa da Morte X_Enaiviel_X Enaiviel já se....jpg</div>
<div style="left:360.5px;top:39px;width:1px;height:12px;background:#444;"></div>
<div class="t" style="left:364.1px;top:41.65px;font-size:8.8px;color:#c8c8c8;transform:scaleX(0.9255);transform-origin:left center;">Chibi Tử Thần.jpg</div>
<div style="left:432px;top:39px;width:1px;height:12px;background:#444;"></div>
<div class="t" style="left:436.2px;top:41.65px;font-size:8.8px;color:#c8c8c8;transform:scaleX(0.9212);transform-origin:left center;">Chibi Tử Thần.jpg</div>
<div style="left:504.5px;top:36px;width:183px;height:17px;background:#3d3d3d;border-radius:2px 2px 0 0;"></div>
<div class="t" style="left:507.6px;top:41.65px;font-size:8.8px;color:#c8c8c8;transform:scaleX(0.9127);transform-origin:left center;">Deusa da Morte X_Enaiviel_X Enaiviel já se....jpg</div>
<div style="left:734px;top:54px;width:14.5px;height:438px;background:#403d3b;"></div>
<div style="left:734.2px;top:53.3px;width:13.8px;height:10.3px;background:#2a2a2a;"></div>
<svg style="position:absolute;left:735px;top:53.5px;" width="12" height="8" viewBox="0 0 12 8"><path d="M2.8 6 L6 2 L9.2 6 Z" fill="#e0e0e0"/></svg>
<div style="left:734.5px;top:221px;width:13.5px;height:108px;background:linear-gradient(to right,#7e7c7b,#686665);border-radius:3px;"></div>
<div style="left:735px;top:480px;width:12px;height:12px;background:#2f2d2c;"></div>
<svg style="position:absolute;left:735px;top:482px;" width="12" height="8" viewBox="0 0 12 8"><path d="M3 2 L6 6 L9 2 Z" fill="#ccc"/></svg>
<div style="left:748.5px;top:54px;width:3.5px;height:438px;background:#2a2a2a;"></div>
<div style="left:342px;top:65px;width:256px;height:412.5px;background-color:#f8f8f8;background-image:linear-gradient(45deg,#ebebeb 25%,transparent 25%,transparent 75%,#ebebeb 75%),linear-gradient(45deg,#ebebeb 25%,transparent 25%,transparent 75%,#ebebeb 75%);background-size:8px 8px;background-position:0 0,4px 4px;"></div>
<svg style="position:absolute;left:342px;top:65px" width="256" height="413" viewBox="342 65 256 413">
<g fill="none" stroke="#b0b0b0" stroke-width="0.7" stroke-linecap="round" stroke-linejoin="round">
<path d="M461 177 Q462 152 470 140 Q480 131 494 132 Q506 137 508 148 Q511 165 512 180 Q514 192 516.6 202.5 Q520 212 522 222"/>
<path d="M501 138 Q506 148 505 158 Q503 166 501 172 Q499 178 498 182.6"/>
<path d="M470 183 Q455 188 440 192 Q432 195 426 197 M476 186 Q462 194 448 199 Q436 203 428 206 M484 190 Q472 198 460 204 Q450 208 442 212 M465 178 Q452 184 440 188" stroke="#bdbdbd"/>
<path d="M487 205 Q476 216 464 228.5 Q452 232 438 238 Q430 242 425 248"/>
<path d="M420 219.5 Q412 232 414 250 Q416 266 410 282 Q406 295 410 308 M420 219.5 Q428 222 430 240 Q432 258 426 272 Q420 285 424 300"/>
<path d="M432 270 Q416 282 400 292 Q384 302 372 312 Q360 322 352 336 M410 296 Q396 306 384 316 Q372 326 362 340 M395 265 Q385 272 375 292" stroke="#c4c4c4"/>
<path d="M506.6 205.3 Q512 214 520.8 220.5 Q535 212 550.7 202.5 Q560 200 567.8 213.8 Q572 236 567 256.5 Q562 278 560 295 Q556 312 548 322"/>
<path d="M550 206 Q546 230 552 250 Q556 270 552 290 Q550 302 544 312"/>
<path d="M522 222 Q540 250 556 280 Q566 300 574 320 Q582 340 590 360 M548 322 Q562 340 572 362 Q580 380 590 395" stroke="#d0d0d0"/>
<path d="M356 398 Q372 392 378 408 Q384 428 370 444 Q366 458 376 470 M392 420 Q408 404 420 420 Q430 440 416 455 Q412 465 420 476 M430 388 Q446 394 452 410 Q446 426 458 440"/>
<path d="M346 420 Q352 442 360 456 Q366 468 372 476 M398 446 Q412 460 426 476 M346 380 Q358 388 356 400"/>
<path d="M560 420 Q576 430 580 446 Q586 462 596 472 M540 430 Q556 440 565 456 Q570 468 580 477 M574 386 Q586 396 592 412 M556 400 Q570 405 574 420"/>
<path d="M356 330 Q370 320 384 312 M346 350 Q356 345 362 340" stroke="#c8c8c8"/>
<path d="M358 320 L364 316 L368 322 L374 318 L380 326 L386 322 L390 330 L396 334 L398 344 M352 336 L356 330 L362 334 L360 342 L366 348" stroke-width="0.6"/>
<path d="M356 398 L362 392 L366 400 L372 396 L376 404 L372 414 L378 420 L374 430 L380 438 M392 400 L398 396 L404 404 L410 400 L414 410 L410 420 M418 418 L424 412 L430 420 L436 416 L440 426 L436 436 L442 444 L438 456"/>
<path d="M430 300 L436 296 L440 304 L446 300 M444 420 L452 414 L458 424 L454 434 L462 440"/>
<path d="M560 360 L566 354 L572 362 L578 358 L582 368 L578 378 L584 386 M550 432 L556 426 L562 434 L568 430 L572 440 L570 452 M578 440 L584 446 L582 456 L590 462"/>
</g>
<g fill="none" stroke="#141414" stroke-linecap="round" stroke-linejoin="round">
<path d="M480.4 108 L487.7 81.2 L495 104 L501.5 84.5 M509.6 83.7 L508 106.4 M509 95 L520.2 93.4 M521 82.9 L521 104 M531.5 82.9 L531.6 102.4" stroke-width="3.5"/>
<circle cx="531.6" cy="74.7" r="1.9" fill="#141414" stroke="none"/>
<path d="M499.5 136 Q485 148 470 179" stroke="#c8c8c8" stroke-width="5.6" stroke-linecap="butt"/>
<path d="M499.5 136 Q485 148 470 179" stroke="#5a5a5a" stroke-width="2.4" stroke-dasharray="1.2 1.6" stroke-linecap="butt"/>
<path d="M497 133.5 Q482 145.5 467.3 177.8" stroke-width="1"/>
<path d="M502 138.5 Q488 150.5 472.7 180.2" stroke-width="1"/>
<path d="M497 133.5 L502 138.5 M467.3 177.8 L472.7 180.2" stroke-width="1"/>
<path d="M498 182.6 L502.4 194 L504 198" stroke-width="1.2"/>
<circle cx="495.3" cy="159.8" r="1.2" fill="#a04050" stroke="none"/>
<circle cx="499.5" cy="168.3" r="1.1" fill="#b04050" stroke="none"/>
<path d="M485.3 198 Q488 212 490.4 225.5" stroke-width="1.4"/>
<path d="M502.4 194 Q506 200 506.6 205.3 Q507 216 505.2 225.5" stroke-width="1.4"/>
<rect x="485.3" y="198" width="19.5" height="5.8" stroke-width="1" fill="#b5b5b5"/><path d="M486 200.9 H504.5" stroke="#333" stroke-width="2.2" stroke-dasharray="1.4 1.2"/>
<path d="M490.4 225.5 L505.2 225.5 M490.4 225.5 L491 249 M505.2 225.5 L504.5 249 M490.4 225.5 L505 233.5 L490.6 241 L504.5 249 M505.2 225.5 L490.6 233.5 L504.8 241 L491 249 M491 249 L504.5 249" stroke-width="1.3"/>
<path d="M455.4 225 L464 228.5 M511 224.5 L520.8 220.5" stroke-width="4" stroke="#444" stroke-dasharray="1.2 0.9" stroke-linecap="butt"/><path d="M455.4 225 L464 228.5 M511 224.5 L520.8 220.5" stroke-width="5" stroke="#222" stroke-opacity="0.35" stroke-linecap="butt"/>
<path d="M499 250 Q492 256 489.2 271.6 L484.9 305.75 Q483 320 482.4 330 L481.8 369.7 L476.2 396.6 L469.5 432.4 Q466 445 461 456" stroke-width="2.2"/>
<path d="M466 440 Q462 452 458 462" stroke-width="2.9"/><path d="M461 454 Q456 466 450.5 476" stroke-width="4.2"/>
<path d="M499 251 Q498 264 499.1 275.9 Q497 283 490 288 Q481 294 468 299 Q450 305 436 313 Q420 322 413 335 Q408 348 401 361" stroke-width="1.6"/>
<path d="M500 250 Q506 258 507.7 267.3 Q510.5 278 512 290 Q513 300 508 310 Q503 318 497 326 Q489 336 490.5 344 Q493 350 493.5 354 Q492.5 360 489.5 365.5" stroke-width="1.5"/>
<path d="M500 250 Q507 255 511.2 261.6 Q516 270 518.4 278.7 Q522 292 523.3 305.75 L526.5 325 L528.8 358.6 L531 403.3 Q533 418 536.6 432.4 Q545 455 554.5 476.5" stroke-width="1.6"/>
<path d="M514.8 252.4 Q514 258 511.2 262.3" stroke-width="1.3"/>
<path d="M464 245 Q476 256 487 265.2 L490.6 262.3" stroke-width="1.3"/>
<path d="M481.4 331.3 Q455 345 426.5 355 Q400 364.5 384.2 368 Q368 370.5 358.9 366.5 Q350 362 348.3 356.6 Q348 351 352.6 350.3" stroke-width="2.5"/>
<path d="M481 332.5 Q462 352 440 367 Q422 376 400 384 Q382 390 362 389.5 Q350 389 342 386.7" stroke-width="2.9"/>
<path d="M481.8 369.7 C483 385 488 395.5 494.1 395.5 C502 395.5 510 386 515 372 C520 360 523 350 525.4 344" stroke-width="1.6"/>
<path d="M477.3 392.1 C479 410 486 426.8 493 426.8 C502 426.8 512 412 520 395 C526 380 529 365 529.9 356.3" stroke-width="1.6"/>
<path d="M527.6 329.5 Q534 340 541 351.8 Q553 366 565 381 Q570 386 574.5 391.25" stroke-width="1.6"/>
<path d="M527.6 329.5 Q529 334 529.9 338.4 Q538 356 545.5 372 Q555 386 565 400 Q577 411 588.25 420" stroke-width="1.6"/>

</g>
</svg>

<div style="left:752px;top:36px;width:272px;height:456px;background:#2b2b2b;"></div>
<div style="left:750px;top:36px;width:2px;height:456px;background:#242424;"></div>
<div style="left:752px;top:36.5px;width:246px;height:16px;background:linear-gradient(to bottom,#23262b 0,#23262b 8%,#3d3632 18%,#3b3734 35%,#383a3c 60%,#3a3836 88%,#25252c 100%);"></div>
<div style="left:752px;top:35.5px;width:246px;height:1.2px;background:#7ea3c4;"></div>
<div class="t" style="left:676.95px;width:400px;text-align:center;top:40.85px;font-size:8.8px;color:#c4c4c4;transform:scaleX(0.9431);transform-origin:center center;">Hoa tiêu</div>
<div style="left:752px;top:52.5px;width:246px;height:21px;background:#282828;"></div>
<div style="left:755.5px;top:55px;width:17.5px;height:17px;background:#3e3e3e;border:1px solid #4a4a4a;border-radius:2px;"></div>
<svg style="position:absolute;left:755.5px;top:55px;" width="17" height="17" viewBox="0 0 17 17"><circle cx="7.3" cy="7.5" r="3.8" fill="none" stroke="#e0e0e0" stroke-width="1.3"/><path d="M10 10.3 L13.5 13.8" stroke="#e0e0e0" stroke-width="1.8"/><path d="M6.5 6.3 L7.5 5.6 V9.6" stroke="#e0e0e0" stroke-width="1"/></svg>
<div style="left:781px;top:55px;width:17.5px;height:17px;background:#3e3e3e;border:1px solid #4a4a4a;border-radius:2px;"></div>
<svg style="position:absolute;left:781px;top:55px;" width="17" height="17" viewBox="0 0 17 17"><circle cx="7.3" cy="7.5" r="3.8" fill="none" stroke="#e0e0e0" stroke-width="1.3"/><path d="M10 10.3 L13.5 13.8" stroke="#e0e0e0" stroke-width="1.8"/><path d="M5.5 7.5 H9.1 M7.3 5.7 V9.3" stroke="#e0e0e0" stroke-width="1.1"/></svg>
<div style="left:801.5px;top:55px;width:17.5px;height:17px;background:#3e3e3e;border:1px solid #4a4a4a;border-radius:2px;"></div>
<svg style="position:absolute;left:801.5px;top:55px;" width="17" height="17" viewBox="0 0 17 17"><rect x="4" y="4" width="9" height="9" fill="none" stroke="#d8d8d8" stroke-width="0.9"/><path d="M4.5 4.5 L7 7 M12.5 4.5 L10 7 M4.5 12.5 L7 10 M12.5 12.5 L10 10" stroke="#e0e0e0" stroke-width="1.1"/></svg>
<div style="left:821.5px;top:55px;width:17.5px;height:17px;background:#3e3e3e;border:1px solid #4a4a4a;border-radius:2px;"></div>
<svg style="position:absolute;left:821.5px;top:55px;" width="17" height="17" viewBox="0 0 17 17"><circle cx="7.3" cy="7.5" r="3.8" fill="none" stroke="#e0e0e0" stroke-width="1.3"/><path d="M10 10.3 L13.5 13.8" stroke="#e0e0e0" stroke-width="1.8"/><path d="M5.5 7.5 H9.1" stroke="#e0e0e0" stroke-width="1.1"/></svg>
<div style="left:847.5px;top:55px;width:17.5px;height:17px;background:#3e3e3e;border:1px solid #4a4a4a;border-radius:2px;"></div>
<svg style="position:absolute;left:847.5px;top:55px;" width="17" height="17" viewBox="0 0 17 17"><path d="M12.8 7 A4.6 4.6 0 1 1 9.5 3.9" fill="none" stroke="#e0e0e0" stroke-width="1.3"/><path d="M8 2.2 L11 4 L8.3 5.6 Z" fill="#e0e0e0"/><rect x="6.3" y="7" width="4.4" height="3.4" fill="#f0f0f0" transform="rotate(-20 8.5 8.7)"/></svg>
<div style="left:868px;top:55px;width:17.5px;height:17px;background:#232323;border:1px solid #4a4a4a;border-radius:2px;"></div>
<svg style="position:absolute;left:868px;top:55px;" width="17" height="17" viewBox="0 0 17 17"><rect x="5" y="5.5" width="7" height="6" fill="#ececec"/><path d="M3.5 4 L5.3 5.8 M13.5 4 L11.7 5.8 M3.5 13 L5.3 11.2 M13.5 13 L11.7 11.2" stroke="#d8d8d8" stroke-width="1.2"/></svg>
<div style="left:887.5px;top:55px;width:17.5px;height:17px;background:#3e3e3e;border:1px solid #4a4a4a;border-radius:2px;"></div>
<svg style="position:absolute;left:887.5px;top:55px;" width="17" height="17" viewBox="0 0 17 17"><path d="M4.2 7 A4.6 4.6 0 1 0 7.5 3.9" fill="none" stroke="#e0e0e0" stroke-width="1.3"/><path d="M9 2.2 L6 4 L8.7 5.6 Z" fill="#e0e0e0"/><rect x="6.3" y="7" width="4.4" height="3.4" fill="#f0f0f0" transform="rotate(20 8.5 8.7)"/></svg>
<div style="left:913px;top:55px;width:17.5px;height:17px;background:#3e3e3e;border:1px solid #4a4a4a;border-radius:2px;"></div>
<svg style="position:absolute;left:913px;top:55px;" width="17" height="17" viewBox="0 0 17 17"><rect x="3.5" y="7" width="4" height="7" fill="#e8e8e8"/><rect x="9.5" y="7" width="4" height="7" fill="none" stroke="#e0e0e0" stroke-width="1"/><path d="M4 5 Q8.5 1 13 5" stroke="#e0e0e0" stroke-width="1.2" fill="none"/></svg>
<div style="left:777px;top:59px;width:1px;height:9px;background:#555;"></div>
<div style="left:843.3px;top:59px;width:1px;height:9px;background:#555;"></div>
<div style="left:909px;top:59px;width:1px;height:9px;background:#555;"></div>
<div style="left:752px;top:73.5px;width:246px;height:34.5px;background:#4a4644;"></div>
<div style="left:865.8px;top:73.8px;width:44.8px;height:34.7px;background:#423e3c;border-left:3px solid #e21a1a;border-right:3px solid #e21a1a;border-top:2.5px solid #e21a1a;border-bottom:1px solid #b02020;"></div>
<div style="left:879px;top:76px;width:20.2px;height:32px;background:#fbfbfb;"></div>
<svg style="position:absolute;left:879px;top:76px;opacity:0.7" width="20.2" height="32" viewBox="342 65 256 412">
<g fill="none" stroke="#b0b0b0" stroke-width="1.54" stroke-linecap="round" stroke-linejoin="round">
<path d="M461 177 Q462 152 470 140 Q480 131 494 132 Q506 137 508 148 Q511 165 512 180 Q514 192 516.6 202.5 Q520 212 522 222"/>
<path d="M501 138 Q506 148 505 158 Q503 166 501 172 Q499 178 498 182.6"/>
<path d="M470 183 Q455 188 440 192 Q432 195 426 197 M476 186 Q462 194 448 199 Q436 203 428 206 M484 190 Q472 198 460 204 Q450 208 442 212 M465 178 Q452 184 440 188" stroke="#bdbdbd"/>
<path d="M487 205 Q476 216 464 228.5 Q452 232 438 238 Q430 242 425 248"/>
<path d="M420 219.5 Q412 232 414 250 Q416 266 410 282 Q406 295 410 308 M420 219.5 Q428 222 430 240 Q432 258 426 272 Q420 285 424 300"/>
<path d="M432 270 Q416 282 400 292 Q384 302 372 312 Q360 322 352 336 M410 296 Q396 306 384 316 Q372 326 362 340 M395 265 Q385 272 375 292" stroke="#c4c4c4"/>
<path d="M506.6 205.3 Q512 214 520.8 220.5 Q535 212 550.7 202.5 Q560 200 567.8 213.8 Q572 236 567 256.5 Q562 278 560 295 Q556 312 548 322"/>
<path d="M550 206 Q546 230 552 250 Q556 270 552 290 Q550 302 544 312"/>
<path d="M522 222 Q540 250 556 280 Q566 300 574 320 Q582 340 590 360 M548 322 Q562 340 572 362 Q580 380 590 395" stroke="#d0d0d0"/>
<path d="M356 398 Q372 392 378 408 Q384 428 370 444 Q366 458 376 470 M392 420 Q408 404 420 420 Q430 440 416 455 Q412 465 420 476 M430 388 Q446 394 452 410 Q446 426 458 440"/>
<path d="M346 420 Q352 442 360 456 Q366 468 372 476 M398 446 Q412 460 426 476 M346 380 Q358 388 356 400"/>
<path d="M560 420 Q576 430 580 446 Q586 462 596 472 M540 430 Q556 440 565 456 Q570 468 580 477 M574 386 Q586 396 592 412 M556 400 Q570 405 574 420"/>
<path d="M356 330 Q370 320 384 312 M346 350 Q356 345 362 340" stroke="#c8c8c8"/>
<path d="M358 320 L364 316 L368 322 L374 318 L380 326 L386 322 L390 330 L396 334 L398 344 M352 336 L356 330 L362 334 L360 342 L366 348" stroke-width="1.32"/>
<path d="M356 398 L362 392 L366 400 L372 396 L376 404 L372 414 L378 420 L374 430 L380 438 M392 400 L398 396 L404 404 L410 400 L414 410 L410 420 M418 418 L424 412 L430 420 L436 416 L440 426 L436 436 L442 444 L438 456"/>
<path d="M430 300 L436 296 L440 304 L446 300 M444 420 L452 414 L458 424 L454 434 L462 440"/>
<path d="M560 360 L566 354 L572 362 L578 358 L582 368 L578 378 L584 386 M550 432 L556 426 L562 434 L568 430 L572 440 L570 452 M578 440 L584 446 L582 456 L590 462"/>
</g>
<g fill="none" stroke="#141414" stroke-linecap="round" stroke-linejoin="round">
<path d="M480.4 108 L487.7 81.2 L495 104 L501.5 84.5 M509.6 83.7 L508 106.4 M509 95 L520.2 93.4 M521 82.9 L521 104 M531.5 82.9 L531.6 102.4" stroke-width="7.70"/>
<circle cx="531.6" cy="74.7" r="1.9" fill="#141414" stroke="none"/>
<path d="M499.5 136 Q485 148 470 179" stroke="#c8c8c8" stroke-width="12.32" stroke-linecap="butt"/>
<path d="M499.5 136 Q485 148 470 179" stroke="#5a5a5a" stroke-width="5.28" stroke-dasharray="1.2 1.6" stroke-linecap="butt"/>
<path d="M497 133.5 Q482 145.5 467.3 177.8" stroke-width="2.20"/>
<path d="M502 138.5 Q488 150.5 472.7 180.2" stroke-width="2.20"/>
<path d="M497 133.5 L502 138.5 M467.3 177.8 L472.7 180.2" stroke-width="2.20"/>
<path d="M498 182.6 L502.4 194 L504 198" stroke-width="2.64"/>
<circle cx="495.3" cy="159.8" r="1.2" fill="#a04050" stroke="none"/>
<circle cx="499.5" cy="168.3" r="1.1" fill="#b04050" stroke="none"/>
<path d="M485.3 198 Q488 212 490.4 225.5" stroke-width="3.08"/>
<path d="M502.4 194 Q506 200 506.6 205.3 Q507 216 505.2 225.5" stroke-width="3.08"/>
<rect x="485.3" y="198" width="19.5" height="5.8" stroke-width="2.20" fill="#b5b5b5"/><path d="M486 200.9 H504.5" stroke="#333" stroke-width="4.84" stroke-dasharray="1.4 1.2"/>
<path d="M490.4 225.5 L505.2 225.5 M490.4 225.5 L491 249 M505.2 225.5 L504.5 249 M490.4 225.5 L505 233.5 L490.6 241 L504.5 249 M505.2 225.5 L490.6 233.5 L504.8 241 L491 249 M491 249 L504.5 249" stroke-width="2.86"/>
<path d="M455.4 225 L464 228.5 M511 224.5 L520.8 220.5" stroke-width="8.80" stroke="#444" stroke-dasharray="1.2 0.9" stroke-linecap="butt"/><path d="M455.4 225 L464 228.5 M511 224.5 L520.8 220.5" stroke-width="11.00" stroke="#222" stroke-opacity="0.35" stroke-linecap="butt"/>
<path d="M499 250 Q492 256 489.2 271.6 L484.9 305.75 Q483 320 482.4 330 L481.8 369.7 L476.2 396.6 L469.5 432.4 Q466 445 461 456" stroke-width="4.84"/>
<path d="M466 440 Q462 452 458 462" stroke-width="6.38"/><path d="M461 454 Q456 466 450.5 476" stroke-width="9.24"/>
<path d="M499 251 Q498 264 499.1 275.9 Q497 283 490 288 Q481 294 468 299 Q450 305 436 313 Q420 322 413 335 Q408 348 401 361" stroke-width="3.52"/>
<path d="M500 250 Q506 258 507.7 267.3 Q510.5 278 512 290 Q513 300 508 310 Q503 318 497 326 Q489 336 490.5 344 Q493 350 493.5 354 Q492.5 360 489.5 365.5" stroke-width="3.30"/>
<path d="M500 250 Q507 255 511.2 261.6 Q516 270 518.4 278.7 Q522 292 523.3 305.75 L526.5 325 L528.8 358.6 L531 403.3 Q533 418 536.6 432.4 Q545 455 554.5 476.5" stroke-width="3.52"/>
<path d="M514.8 252.4 Q514 258 511.2 262.3" stroke-width="2.86"/>
<path d="M464 245 Q476 256 487 265.2 L490.6 262.3" stroke-width="2.86"/>
<path d="M481.4 331.3 Q455 345 426.5 355 Q400 364.5 384.2 368 Q368 370.5 358.9 366.5 Q350 362 348.3 356.6 Q348 351 352.6 350.3" stroke-width="5.50"/>
<path d="M481 332.5 Q462 352 440 367 Q422 376 400 384 Q382 390 362 389.5 Q350 389 342 386.7" stroke-width="6.38"/>
<path d="M481.8 369.7 C483 385 488 395.5 494.1 395.5 C502 395.5 510 386 515 372 C520 360 523 350 525.4 344" stroke-width="3.52"/>
<path d="M477.3 392.1 C479 410 486 426.8 493 426.8 C502 426.8 512 412 520 395 C526 380 529 365 529.9 356.3" stroke-width="3.52"/>
<path d="M527.6 329.5 Q534 340 541 351.8 Q553 366 565 381 Q570 386 574.5 391.25" stroke-width="3.52"/>
<path d="M527.6 329.5 Q529 334 529.9 338.4 Q538 356 545.5 372 Q555 386 565 400 Q577 411 588.25 420" stroke-width="3.52"/>

</g>
</svg>
<div style="left:752px;top:112.8px;width:246px;height:15px;background:linear-gradient(to bottom,#23262b 0,#23262b 8%,#3d3632 18%,#3b3734 35%,#383a3c 60%,#3a3836 88%,#25252c 100%);"></div>
<div style="left:752px;top:111.8px;width:246px;height:1.2px;background:#7ea3c4;"></div>
<div class="t" style="left:677px;width:400px;text-align:center;top:116.35px;font-size:8.8px;color:#c4c4c4;transform:scaleX(0.9189);transform-origin:center center;">Lớp</div>
<div style="left:752px;top:127.8px;width:272px;height:168px;background:#2b2b2b;"></div>
<div class="t" style="left:756.9px;top:134.77px;font-size:9.13px;color:#cfcfcf;transform:scaleX(0.9371);transform-origin:left center;">Độ trong</div>
<div style="left:825.5px;top:132px;width:158.5px;height:12px;background:linear-gradient(to right,#78baf0,#4d94d2);"></div>
<div class="t" style="left:988.9px;top:134.34px;font-size:8.58px;color:#cfcfcf;transform:scaleX(0.8903);transform-origin:left center;">10</div>
<div class="t" style="left:756.9px;top:152.87px;font-size:9.13px;color:#cfcfcf;transform:scaleX(0.8899);transform-origin:left center;">Pha trộn</div>
<div style="left:826px;top:149px;width:172px;height:16px;background:#434343;"></div>
<div class="t" style="left:827.6px;top:152.87px;font-size:9.13px;color:#bdbdbd;transform:scaleX(0.9000);transform-origin:left center;">Bình thường</div>
<div style="left:759px;top:173.3px;width:8.7px;height:7.8px;border:1px solid #cfcfcf;"></div>
<div class="t" style="left:771.5px;top:172.87px;font-size:9.13px;color:#cfcfcf;transform:scaleX(0.8802);transform-origin:left center;">Bảo vệ alpha</div>
<div style="left:848.7px;top:173.3px;width:8.7px;height:7.8px;border:1px solid #5a5a5a;"></div>
<div class="t" style="left:860.8px;top:172.87px;font-size:9.13px;color:#6a6a6a;transform:scaleX(0.8865);transform-origin:left center;">Xén bớt</div>
<div style="left:937.2px;top:173.3px;width:8.7px;height:7.8px;border:1px solid #cfcfcf;"></div>
<div class="t" style="left:949.6px;top:172.87px;font-size:9.13px;color:#cfcfcf;transform:scaleX(0.8680);transform-origin:left center;">Khóa</div>
<div style="left:755px;top:188px;width:243px;height:58px;background:#4a4644;"></div>
<div style="left:755px;top:188px;width:243px;height:28.8px;background:#5b5b5b;"></div>
<div style="left:785px;top:189px;width:16.5px;height:26.5px;background:#f0f0f0;"></div>
<svg style="position:absolute;left:785px;top:189px;" width="16.5" height="26.5" viewBox="0 0 16.5 26.5"><circle cx="8.3" cy="6.3" r="2.3" fill="#2a2a2a"/><path d="M6 8.5 L10.5 8.5 L13 9.5 L15 8 L15.5 11 L13 13 L14.5 18 L16.5 26.5 L0.3 26.5 L1.5 20 L4 14 L5 11 Z" fill="#2e2e2e"/><path d="M5 26 L7 16 M9.5 26 L10 15 M3 22 L8 18" stroke="#555" stroke-width="0.6"/><path d="M11 10 L14 9" stroke="#ddd" stroke-width="0.8"/></svg>
<div class="t" style="left:818.6px;top:198.14px;font-size:10.23px;color:#eeeeee;transform:scaleX(0.8626);transform-origin:left center;">Lớp2</div>
<div style="left:755px;top:217.8px;width:243px;height:28.2px;background:#5b5b5b;"></div>
<div style="left:768.3px;top:217.8px;width:229.7px;height:28.2px;background:#4f97d3;"></div>
<div style="left:757.3px;top:228px;width:8px;height:8px;border-radius:50%;background:radial-gradient(circle at 40% 40%,#fff,#c8c8c8);"></div>
<div style="left:785px;top:219px;width:16.5px;height:26px;background-color:#fbfbfb;background-image:linear-gradient(45deg,#e6e0d8 25%,transparent 25%,transparent 75%,#e6e0d8 75%),linear-gradient(45deg,#e6e0d8 25%,transparent 25%,transparent 75%,#e6e0d8 75%);background-size:5px 5px;background-position:0 0,2.5px 2.5px;"></div>
<svg style="position:absolute;left:785px;top:219px;" width="16.5" height="26" viewBox="0 0 16.5 26"><path d="M9 3 L8 12 L6 22 M9 8 L11 16 L13 24 M4 15 Q8 14 12 12 M3 19 Q7 17 10 16" stroke="#b09878" stroke-width="0.6" fill="none"/></svg>
<div class="t" style="left:818.6px;top:227.44px;font-size:10.23px;color:#ffffff;transform:scaleX(0.9278);transform-origin:left center;font-weight:bold;">Lớp1</div>
<svg style="position:absolute;left:991.5px;top:226.4px;" width="12" height="12" viewBox="0 0 12 12"><g fill="#fff"><circle cx="6" cy="6" r="3.6"/><rect x="5" y="0.3" width="2" height="3.2" transform="rotate(0 6 6)"/><rect x="5" y="0.3" width="2" height="3.2" transform="rotate(45 6 6)"/><rect x="5" y="0.3" width="2" height="3.2" transform="rotate(90 6 6)"/><rect x="5" y="0.3" width="2" height="3.2" transform="rotate(135 6 6)"/><rect x="5" y="0.3" width="2" height="3.2" transform="rotate(180 6 6)"/><rect x="5" y="0.3" width="2" height="3.2" transform="rotate(225 6 6)"/><rect x="5" y="0.3" width="2" height="3.2" transform="rotate(270 6 6)"/><rect x="5" y="0.3" width="2" height="3.2" transform="rotate(315 6 6)"/></g><circle cx="6" cy="6" r="1.3" fill="#4f97d3"/></svg>
<div style="left:752px;top:246px;width:256px;height:23px;background:#4a4644;"></div>
<div style="left:752px;top:269px;width:272px;height:27.5px;background:#282828;"></div>
<div style="left:757.6px;top:272px;width:16.7px;height:16.7px;background:#3e3e3e;border:1px solid #4a4a4a;border-radius:2px;"></div>
<svg style="position:absolute;left:757.6px;top:272px;" width="17" height="17" viewBox="0 0 17 17"><path d="M5 3.5 H10.5 L13 6 V14 H5 Z" fill="none" stroke="#d8d8d8" stroke-width="1.1"/></svg>
<div style="left:777.2px;top:272px;width:16.7px;height:16.7px;background:#3e3e3e;border:1px solid #4a4a4a;border-radius:2px;"></div>
<svg style="position:absolute;left:777.2px;top:272px;" width="17" height="17" viewBox="0 0 17 17"><path d="M5 3.5 H10.5 L13 6 V14 H5 Z" fill="none" stroke="#d8d8d8" stroke-width="1.1"/><ellipse cx="9" cy="8.3" rx="1.6" ry="1.3" fill="none" stroke="#d8d8d8" stroke-width="0.9"/><ellipse cx="9" cy="11.2" rx="1.8" ry="1.5" fill="none" stroke="#d8d8d8" stroke-width="0.9"/></svg>
<div style="left:798px;top:272px;width:16.7px;height:16.7px;background:#3e3e3e;border:1px solid #4a4a4a;border-radius:2px;"></div>
<svg style="position:absolute;left:798px;top:272px;" width="17" height="17" viewBox="0 0 17 17"><path d="M5 3.5 H10.5 L13 6 V14 H5 Z" fill="none" stroke="#d8d8d8" stroke-width="1.1"/><path d="M8 8 L9.3 7 V12.8" stroke="#d8d8d8" stroke-width="1" fill="none"/></svg>
<div style="left:818.3px;top:272px;width:21.7px;height:16.7px;background:#3e3e3e;border:1px solid #4a4a4a;border-radius:2px;"></div>
<svg style="position:absolute;left:818.3px;top:272px;" width="22" height="17" viewBox="0 0 22 17"><path d="M4 3.5 H8.5 L10.5 5.5 V9 M4 3.5 V13.5 H7" fill="none" stroke="#d8d8d8" stroke-width="1.1"/><path d="M9.5 9 V14.5 M6.8 11.8 H12.2" stroke="#e6e6e6" stroke-width="1.4"/><path d="M14.5 8.5 H19 L16.75 11 Z" fill="#e6e6e6"/></svg>
<div style="left:843.7px;top:272px;width:16.7px;height:16.7px;background:#3e3e3e;border:1px solid #4a4a4a;border-radius:2px;"></div>
<svg style="position:absolute;left:843.7px;top:272px;" width="17" height="17" viewBox="0 0 17 17"><path d="M3 5 H7.5 L9 6.5 H14.5 V13.5 H3 Z" fill="#e6e6e6"/></svg>
<div style="left:869.4px;top:272px;width:16.7px;height:16.7px;background:#3e3e3e;border:1px solid #4a4a4a;border-radius:2px;"></div>
<svg style="position:absolute;left:869.4px;top:272px;" width="17" height="17" viewBox="0 0 17 17"><rect x="6" y="3.5" width="8" height="8" fill="none" stroke="#d8d8d8" stroke-width="1.1"/><rect x="3.5" y="6" width="8" height="8" fill="#3e3e3e" stroke="#d8d8d8" stroke-width="1.1"/></svg>
<div style="left:889.4px;top:272px;width:16.7px;height:16.7px;background:#232323;border:1px solid #4a4a4a;border-radius:2px;"></div>
<svg style="position:absolute;left:889.4px;top:272px;" width="17" height="17" viewBox="0 0 17 17"><rect x="3" y="3" width="5" height="4" fill="#e6e6e6"/><rect x="9" y="6.5" width="5.5" height="4.5" fill="#e6e6e6"/><rect x="3" y="10" width="5" height="4" fill="none" stroke="#e6e6e6" stroke-width="1"/></svg>
<div style="left:915px;top:272px;width:16.7px;height:16.7px;background:#3e3e3e;border:1px solid #4a4a4a;border-radius:2px;"></div>
<svg style="position:absolute;left:915px;top:272px;" width="17" height="17" viewBox="0 0 17 17"><path d="M4 5 H13 M6.5 5 V3.5 H10.5 V5" stroke="#e6e6e6" stroke-width="1.1" fill="none"/><rect x="4.5" y="6" width="8" height="8.5" fill="#e6e6e6"/><path d="M6.7 7.5 V13 M8.5 7.5 V13 M10.3 7.5 V13" stroke="#3e3e3e" stroke-width="0.9"/></svg>
<div style="left:864.8px;top:276px;width:1px;height:9px;background:#555;"></div>
<div style="left:910.5px;top:276px;width:1px;height:9px;background:#555;"></div>
<div style="left:1008px;top:261px;width:13px;height:8px;background:#45413f;"></div>
<div style="left:1008px;top:269px;width:13px;height:28px;background:#2e2c2b;"></div>
<svg style="position:absolute;left:1009.5px;top:261px;" width="12" height="8" viewBox="0 0 12 8"><path d="M2.5 1.5 L6 6.5 L9.5 1.5 Z" fill="#a8a8a8"/></svg>
<div style="left:1021px;top:261.5px;width:3px;height:58px;background:#4f97d3;"></div>
<div style="left:752px;top:298.3px;width:268px;height:15.5px;background:linear-gradient(to bottom,#23262b 0,#23262b 8%,#3d3632 18%,#3b3734 35%,#383a3c 60%,#3a3836 88%,#25252c 100%);"></div>
<div style="left:752px;top:297.3px;width:268px;height:1.2px;background:#7ea3c4;"></div>
<div class="t" style="left:676.65px;width:400px;text-align:center;top:302.35px;font-size:8.8px;color:#c4c4c4;transform:scaleX(0.9386);transform-origin:center center;">Reference</div>
<svg style="position:absolute;left:1003px;top:301.3px;" width="9" height="9" viewBox="0 0 9 9"><path d="M1.5 3 V8 H6.5 V5.5 M1.5 3 H4" stroke="#c8c8c8" stroke-width="1" fill="none"/><path d="M4.5 4.5 L8 1 M5.5 1 H8 V3.5" stroke="#c8c8c8" stroke-width="1" fill="none"/></svg>
<svg style="position:absolute;left:1015px;top:301.8px;" width="8" height="8" viewBox="0 0 8 8"><path d="M1.2 1.2 L6.8 6.8 M6.8 1.2 L1.2 6.8" stroke="#dcdcdc" stroke-width="1.9"/></svg>
<div style="left:752px;top:313.8px;width:268px;height:22.5px;background:#282828;"></div>
<div style="left:755.5px;top:315.5px;width:17px;height:17px;background:#444444;border:1px solid #474747;border-radius:2px;"></div>
<svg style="position:absolute;left:755.5px;top:315.5px;" width="17" height="17" viewBox="0 0 17 17"><path d="M4 10 Q2 10 2.5 7.5 Q3 5.5 5 6 Q5.5 2.8 8.5 3 Q11.5 3.2 11.8 6 Q14.5 6 14.3 8.5 Q14 10.5 12 10.5 Z" fill="#e6e6e6"/><path d="M8.5 7 V14.5 M6.3 12 L8.5 14.5 L10.7 12" stroke="#3e3e3e" stroke-width="1.6" fill="none"/><path d="M8.5 8.5 V14.5 M6.3 12 L8.5 14.5 L10.7 12" stroke="#e6e6e6" stroke-width="1" fill="none"/></svg>
<div style="left:776.3px;top:315.5px;width:17px;height:17px;background:#444444;border:1px solid #474747;border-radius:2px;"></div>
<svg style="position:absolute;left:776.3px;top:315.5px;" width="17" height="17" viewBox="0 0 17 17"><path d="M3 5 H7 L8.5 6.5 H13.5 V13 H3 Z" fill="#d8d8d8"/><path d="M3 13 L5 8.5 H15 L13.5 13 Z" fill="#f0f0f0"/></svg>
<div style="left:796.5px;top:315.5px;width:17px;height:17px;background:#262626;border:1px solid #474747;border-radius:2px;"></div>
<svg style="position:absolute;left:796.5px;top:315.5px;" width="17" height="17" viewBox="0 0 17 17"><path d="M5.5 5.5 L11.5 11.5 M11.5 5.5 L5.5 11.5" stroke="#e6e6e6" stroke-width="1.5"/></svg>
<div style="left:822px;top:315.5px;width:17px;height:17px;background:#262626;border:1px solid #474747;border-radius:2px;"></div>
<svg style="position:absolute;left:822px;top:315.5px;" width="17" height="17" viewBox="0 0 17 17"><circle cx="7.3" cy="7.5" r="3.8" fill="none" stroke="#e0e0e0" stroke-width="1.3"/><path d="M10 10.3 L13.5 13.8" stroke="#e0e0e0" stroke-width="1.8"/><path d="M5.5 7.5 H9.1 M7.3 5.7 V9.3" stroke="#e0e0e0" stroke-width="1.1"/></svg>
<div style="left:842.3px;top:315.5px;width:17px;height:17px;background:#262626;border:1px solid #474747;border-radius:2px;"></div>
<svg style="position:absolute;left:842.3px;top:315.5px;" width="17" height="17" viewBox="0 0 17 17"><rect x="4" y="4" width="9" height="9" fill="none" stroke="#d8d8d8" stroke-width="0.9"/><path d="M4.5 4.5 L7 7 M12.5 4.5 L10 7 M4.5 12.5 L7 10 M12.5 12.5 L10 10" stroke="#e0e0e0" stroke-width="1.1"/></svg>
<div style="left:862.5px;top:315.5px;width:17px;height:17px;background:#262626;border:1px solid #474747;border-radius:2px;"></div>
<svg style="position:absolute;left:862.5px;top:315.5px;" width="17" height="17" viewBox="0 0 17 17"><circle cx="7.3" cy="7.5" r="3.8" fill="none" stroke="#e0e0e0" stroke-width="1.3"/><path d="M10 10.3 L13.5 13.8" stroke="#e0e0e0" stroke-width="1.8"/><path d="M5.5 7.5 H9.1" stroke="#e0e0e0" stroke-width="1.1"/></svg>
<div style="left:888px;top:315.5px;width:17px;height:17px;background:#262626;border:1px solid #474747;border-radius:2px;"></div>
<svg style="position:absolute;left:888px;top:315.5px;" width="17" height="17" viewBox="0 0 17 17"><path d="M4.5 13.5 L11 7" stroke="#e6e6e6" stroke-width="2.6"/><path d="M4.5 13.5 L11 7" stroke="#2a2a2a" stroke-width="1"/><path d="M10 4.5 L13 7.5 M11.5 3 L14.5 6" stroke="#e6e6e6" stroke-width="2"/></svg>
<div style="left:908.4px;top:315.5px;width:17px;height:17px;background:#4f97d6;border:1px solid #5aa0dc;border-radius:2px;"></div>
<svg style="position:absolute;left:908.4px;top:315.5px;" width="17" height="17" viewBox="0 0 17 17"><path d="M5.5 15.5 Q3 12 3.5 9.5 L4 7.5 Q5 7 5.5 8.5 V4.5 Q6.5 3.5 7.3 4.5 V8.5 V3.3 Q8.5 2.3 9.3 3.3 V8.5 V4 Q10.5 3 11.3 4 V9 V6 Q12.5 5 13.3 6 V11 Q13 14.5 11 15.5 Z" fill="#f4f4f4"/></svg>
<div style="left:934.5px;top:315.5px;width:17px;height:17px;background:#262626;border:1px solid #474747;border-radius:2px;"></div>
<svg style="position:absolute;left:934.5px;top:315.5px;" width="17" height="17" viewBox="0 0 17 17"><path d="M12.8 7 A4.6 4.6 0 1 1 9.5 3.9" fill="none" stroke="#e0e0e0" stroke-width="1.3"/><path d="M8 2.2 L11 4 L8.3 5.6 Z" fill="#e0e0e0"/><rect x="6.3" y="7" width="4.4" height="3.4" fill="#f0f0f0" transform="rotate(-20 8.5 8.7)"/></svg>
<div style="left:955px;top:315.5px;width:17px;height:17px;background:#262626;border:1px solid #474747;border-radius:2px;"></div>
<svg style="position:absolute;left:955px;top:315.5px;" width="17" height="17" viewBox="0 0 17 17"><rect x="5" y="5.5" width="7" height="6" fill="#ececec"/><path d="M3.5 4 L5.3 5.8 M13.5 4 L11.7 5.8 M3.5 13 L5.3 11.2 M13.5 13 L11.7 11.2" stroke="#d8d8d8" stroke-width="1.2"/></svg>
<div style="left:974.4px;top:315.5px;width:17px;height:17px;background:#262626;border:1px solid #474747;border-radius:2px;"></div>
<svg style="position:absolute;left:974.4px;top:315.5px;" width="17" height="17" viewBox="0 0 17 17"><path d="M4.2 7 A4.6 4.6 0 1 0 7.5 3.9" fill="none" stroke="#e0e0e0" stroke-width="1.3"/><path d="M9 2.2 L6 4 L8.7 5.6 Z" fill="#e0e0e0"/><rect x="6.3" y="7" width="4.4" height="3.4" fill="#f0f0f0" transform="rotate(20 8.5 8.7)"/></svg>
<div style="left:1000px;top:315.5px;width:17px;height:17px;background:#262626;border:1px solid #474747;border-radius:2px;"></div>
<svg style="position:absolute;left:1000px;top:315.5px;" width="17" height="17" viewBox="0 0 17 17"><rect x="3.5" y="7" width="4" height="7" fill="#e8e8e8"/><rect x="9.5" y="7" width="4" height="7" fill="none" stroke="#e0e0e0" stroke-width="1"/><path d="M4 5 Q8.5 1 13 5" stroke="#e0e0e0" stroke-width="1.2" fill="none"/></svg>
<div style="left:817.5px;top:319px;width:1px;height:9px;background:#555;"></div>
<div style="left:883.3px;top:319px;width:1px;height:9px;background:#555;"></div>
<div style="left:929.4px;top:319px;width:1px;height:9px;background:#555;"></div>
<div style="left:995.4px;top:319px;width:1px;height:9px;background:#555;"></div>
<div style="left:752.5px;top:336.3px;width:271.5px;height:31.5px;background-color:#f6f6f6;background-image:linear-gradient(45deg,#e9e9e9 25%,transparent 25%,transparent 75%,#e9e9e9 75%),linear-gradient(45deg,#e9e9e9 25%,transparent 25%,transparent 75%,#e9e9e9 75%);background-size:8px 8px;background-position:0 0,4px 4px;"></div>
<div style="left:752px;top:367.8px;width:272px;height:4.4px;background:#242424;"></div>
<div style="left:752px;top:373.2px;width:272px;height:13.5px;background:linear-gradient(to bottom,#23262b 0,#23262b 8%,#3d3632 18%,#3b3734 35%,#383a3c 60%,#3a3836 88%,#25252c 100%);"></div>
<div style="left:752px;top:372.2px;width:272px;height:1.2px;background:#7ea3c4;"></div>
<div class="t" style="left:677.3px;width:400px;text-align:center;top:376.15px;font-size:8.8px;color:#c4c4c4;transform:scaleX(0.8837);transform-origin:center center;">Brush Size</div>
<svg style="position:absolute;left:1003px;top:376.2px;" width="9" height="9" viewBox="0 0 9 9"><path d="M1.5 3 V8 H6.5 V5.5 M1.5 3 H4" stroke="#c8c8c8" stroke-width="1" fill="none"/><path d="M4.5 4.5 L8 1 M5.5 1 H8 V3.5" stroke="#c8c8c8" stroke-width="1" fill="none"/></svg>
<svg style="position:absolute;left:1015px;top:376.7px;" width="8" height="8" viewBox="0 0 8 8"><path d="M1.2 1.2 L6.8 6.8 M6.8 1.2 L1.2 6.8" stroke="#dcdcdc" stroke-width="1.9"/></svg>
<div style="left:752px;top:386.7px;width:272px;height:105.3px;background:#2b2b2b;"></div>
<div style="left:752.5px;top:387px;width:240px;height:105px;background:#3a3a3a;"></div>
<div style="left:753px;top:388.3px;width:28.5px;height:36.2px;background:#595959;"></div>
<div class="t" style="left:567.25px;width:400px;text-align:center;top:416.80px;font-size:8.03px;color:#ececec;transform:scaleX(0.9000);transform-origin:center center;">1</div>
<div style="left:783px;top:388.3px;width:28.5px;height:36.2px;background:#595959;"></div>
<div style="left:796.85px;top:402.50px;width:0.8px;height:0.8px;border-radius:50%;background:#f2f2f2;"></div>
<div class="t" style="left:597.25px;width:400px;text-align:center;top:416.80px;font-size:8.03px;color:#ececec;transform:scaleX(0.9000);transform-origin:center center;">1.5</div>
<div style="left:813px;top:388.3px;width:28.5px;height:36.2px;background:#595959;"></div>
<div style="left:826.65px;top:402.30px;width:1.2px;height:1.2px;border-radius:50%;background:#f2f2f2;"></div>
<div class="t" style="left:627.25px;width:400px;text-align:center;top:416.80px;font-size:8.03px;color:#ececec;transform:scaleX(0.9000);transform-origin:center center;">2</div>
<div style="left:843px;top:388.3px;width:28.5px;height:36.2px;background:#595959;"></div>
<div style="left:856.35px;top:402.00px;width:1.8px;height:1.8px;border-radius:50%;background:#f2f2f2;"></div>
<div class="t" style="left:657.25px;width:400px;text-align:center;top:416.80px;font-size:8.03px;color:#ececec;transform:scaleX(0.9000);transform-origin:center center;">3</div>
<div style="left:873px;top:388.3px;width:28.5px;height:36.2px;background:#595959;"></div>
<div style="left:885.95px;top:401.60px;width:2.6px;height:2.6px;border-radius:50%;background:#f2f2f2;"></div>
<div class="t" style="left:687.25px;width:400px;text-align:center;top:416.80px;font-size:8.03px;color:#ececec;transform:scaleX(0.9000);transform-origin:center center;">4</div>
<div style="left:903px;top:388.3px;width:28.5px;height:36.2px;background:#595959;"></div>
<div style="left:915.65px;top:401.30px;width:3.2px;height:3.2px;border-radius:50%;background:#f2f2f2;"></div>
<div class="t" style="left:717.25px;width:400px;text-align:center;top:416.80px;font-size:8.03px;color:#ececec;transform:scaleX(0.9000);transform-origin:center center;">5</div>
<div style="left:933px;top:388.3px;width:28.5px;height:36.2px;background:#595959;"></div>
<div style="left:944.95px;top:400.60px;width:4.6px;height:4.6px;border-radius:50%;background:#f2f2f2;"></div>
<div class="t" style="left:747.25px;width:400px;text-align:center;top:416.80px;font-size:8.03px;color:#ececec;transform:scaleX(0.9000);transform-origin:center center;">7</div>
<div style="left:963px;top:388.3px;width:28.5px;height:36.2px;background:#595959;"></div>
<div style="left:973.65px;top:399.30px;width:7.2px;height:7.2px;border-radius:50%;background:#f2f2f2;"></div>
<div class="t" style="left:777.25px;width:400px;text-align:center;top:416.80px;font-size:8.03px;color:#ececec;transform:scaleX(0.9000);transform-origin:center center;">10</div>
<div style="left:753px;top:426.0px;width:28.5px;height:36.2px;background:#595959;"></div>
<div style="left:762.65px;top:435.40px;width:9.2px;height:9.2px;border-radius:50%;background:#f2f2f2;"></div>
<div class="t" style="left:567.25px;width:400px;text-align:center;top:454.50px;font-size:8.03px;color:#ececec;transform:scaleX(0.9000);transform-origin:center center;">12</div>
<div style="left:783px;top:426.0px;width:28.5px;height:36.2px;background:#595959;"></div>
<div style="left:791.45px;top:434.20px;width:11.6px;height:11.6px;border-radius:50%;background:#f2f2f2;"></div>
<div class="t" style="left:597.25px;width:400px;text-align:center;top:454.50px;font-size:8.03px;color:#ececec;transform:scaleX(0.9000);transform-origin:center center;">15</div>
<div style="left:813px;top:426.0px;width:28.5px;height:36.2px;background:#595959;"></div>
<div style="left:819.85px;top:432.60px;width:14.8px;height:14.8px;border-radius:50%;background:#f2f2f2;"></div>
<div class="t" style="left:627.25px;width:400px;text-align:center;top:454.50px;font-size:8.03px;color:#ececec;transform:scaleX(0.9000);transform-origin:center center;">20</div>
<div style="left:843px;top:426.0px;width:28.5px;height:36.2px;background:#595959;"></div>
<div style="left:847.90px;top:430.65px;width:18.7px;height:18.7px;border-radius:50%;background:#f2f2f2;"></div>
<div class="t" style="left:657.25px;width:400px;text-align:center;top:454.50px;font-size:8.03px;color:#ececec;transform:scaleX(0.9000);transform-origin:center center;">25</div>
<div style="left:873px;top:426.0px;width:28.5px;height:36.2px;background:#595959;"></div>
<div style="left:877.90px;top:430.65px;width:18.7px;height:18.7px;border-radius:50%;background:#f2f2f2;"></div>
<div class="t" style="left:687.25px;width:400px;text-align:center;top:454.50px;font-size:8.03px;color:#ececec;transform:scaleX(0.9000);transform-origin:center center;">30</div>
<div style="left:903px;top:426.0px;width:28.5px;height:36.2px;background:#595959;"></div>
<div style="left:907.90px;top:430.65px;width:18.7px;height:18.7px;border-radius:50%;background:#f2f2f2;"></div>
<div class="t" style="left:717.25px;width:400px;text-align:center;top:454.50px;font-size:8.03px;color:#ececec;transform:scaleX(0.9000);transform-origin:center center;">40</div>
<div style="left:933px;top:426.0px;width:28.5px;height:36.2px;background:#595959;"></div>
<div style="left:937.90px;top:430.65px;width:18.7px;height:18.7px;border-radius:50%;background:#f2f2f2;"></div>
<div class="t" style="left:747.25px;width:400px;text-align:center;top:454.50px;font-size:8.03px;color:#ececec;transform:scaleX(0.9000);transform-origin:center center;">50</div>
<div style="left:963px;top:426.0px;width:28.5px;height:36.2px;background:#595959;"></div>
<div style="left:967.90px;top:430.65px;width:18.7px;height:18.7px;border-radius:50%;background:#f2f2f2;"></div>
<div class="t" style="left:777.25px;width:400px;text-align:center;top:454.50px;font-size:8.03px;color:#ececec;transform:scaleX(0.9000);transform-origin:center center;">70</div>
<div style="left:753px;top:463.70000000000005px;width:28.5px;height:36.2px;background:#595959;"></div>
<div style="left:758.00px;top:468.45px;width:18.5px;height:18.5px;border-radius:50%;background:#f2f2f2;"></div>
<div style="left:783px;top:463.70000000000005px;width:28.5px;height:36.2px;background:#595959;"></div>
<div style="left:788.00px;top:468.45px;width:18.5px;height:18.5px;border-radius:50%;background:#f2f2f2;"></div>
<div style="left:813px;top:463.70000000000005px;width:28.5px;height:36.2px;background:#595959;"></div>
<div style="left:818.00px;top:468.45px;width:18.5px;height:18.5px;border-radius:50%;background:#f2f2f2;"></div>
<div style="left:843px;top:463.70000000000005px;width:28.5px;height:36.2px;background:#595959;"></div>
<div style="left:848.00px;top:468.45px;width:18.5px;height:18.5px;border-radius:50%;background:#f2f2f2;"></div>
<div style="left:873px;top:463.70000000000005px;width:28.5px;height:36.2px;background:#595959;"></div>
<div style="left:878.00px;top:468.45px;width:18.5px;height:18.5px;border-radius:50%;background:#f2f2f2;"></div>
<div style="left:903px;top:463.70000000000005px;width:28.5px;height:36.2px;background:#595959;"></div>
<div style="left:908.00px;top:468.45px;width:18.5px;height:18.5px;border-radius:50%;background:#f2f2f2;"></div>
<div style="left:933px;top:463.70000000000005px;width:28.5px;height:36.2px;background:#595959;"></div>
<div style="left:938.00px;top:468.45px;width:18.5px;height:18.5px;border-radius:50%;background:#f2f2f2;"></div>
<div style="left:963px;top:463.70000000000005px;width:28.5px;height:36.2px;background:#595959;"></div>
<div style="left:968.00px;top:468.45px;width:18.5px;height:18.5px;border-radius:50%;background:#f2f2f2;"></div>
<div style="left:992.5px;top:387px;width:18px;height:105px;background:#4a4644;"></div>
<div style="left:1010.8px;top:387px;width:13.2px;height:105px;background:#262626;"></div>
<svg style="position:absolute;left:1011px;top:388px;" width="13" height="8" viewBox="0 0 13 8"><path d="M3.5 6.5 L6.5 2.5 L9.5 6.5 Z" fill="#ccc"/></svg>
<div style="left:1012px;top:397px;width:11px;height:95px;background:linear-gradient(to right,#6e6e6e,#5a5a5a);border-radius:3px;"></div>
<div style="left:998px;top:0px;width:26px;height:261px;background:#1c1c1c;"></div>
<div style="left:1001.5px;top:0px;width:19.5px;height:16.3px;background:#0e0e0e;border:1px solid #353535;"></div>
<div style="left:1001.5px;top:21.3px;width:19.5px;height:19.3px;background:#4f9be0;border:1px solid #62a6e0;"></div>
<div style="left:1001.5px;top:43.7px;width:19.5px;height:17.3px;background:#0e0e0e;border:1px solid #353535;"></div>
<div style="left:1001.5px;top:64px;width:19.5px;height:17.3px;background:#0e0e0e;border:1px solid #353535;"></div>
<div style="left:1001.5px;top:85px;width:19.5px;height:18.4px;background:#0e0e0e;border:1px solid #353535;"></div>
<div style="left:1001.5px;top:106.4px;width:19.5px;height:18.3px;background:#0e0e0e;border:1px solid #353535;"></div>
<div style="left:1001.5px;top:127.8px;width:19.5px;height:18.2px;background:#0e0e0e;border:1px solid #353535;"></div>
<div style="left:1001.5px;top:149px;width:19.5px;height:18.4px;background:#0e0e0e;border:1px solid #353535;"></div>
<div style="left:1001.5px;top:170.4px;width:19.5px;height:18px;background:#0e0e0e;border:1px solid #353535;"></div>
<div style="left:1001.5px;top:196.4px;width:19.5px;height:18.3px;background:#0e0e0e;border:1px solid #353535;"></div>
<div style="left:1001.5px;top:217.8px;width:19.5px;height:18.2px;background:#0e0e0e;border:1px solid #353535;"></div>
<div style="left:1001px;top:243.5px;width:20.5px;height:13.5px;background:#111;border:1px solid #3a3a3a;"></div>
<svg style="position:absolute;left:1001.5px;top:0px;" width="20" height="18" viewBox="0 0 20 18"><path d="M6 2 V14 L9 11 L11.5 15.5 L13 14.8 L10.8 10.3 L14.5 10 Z" fill="#e6e6e6"/></svg>
<svg style="position:absolute;left:1001.5px;top:21.3px;" width="20" height="18" viewBox="0 0 20 18"><g transform="rotate(-45 10 9.5)"><rect x="5" y="7" width="11" height="5" rx="0.8" fill="#fff"/><path d="M5 7 L1.5 9.5 L5 12 Z" fill="#fff"/><path d="M6 9.5 H15.5" stroke="#4f9be0" stroke-width="0.9"/><path d="M13.5 7 V12" stroke="#4f9be0" stroke-width="0.8"/></g></svg>
<svg style="position:absolute;left:1001.5px;top:43.7px;" width="20" height="18" viewBox="0 0 20 18"><path d="M5 13 L12 5 Q15 4 15 7 L8 15 Z" fill="#e6e6e6"/><path d="M4 16.5 L5.5 13 L8 15 Z" fill="#e6e6e6"/><path d="M6.5 12 L9.5 14.5" stroke="#202020" stroke-width="1"/></svg>
<svg style="position:absolute;left:1001.5px;top:64px;" width="20" height="18" viewBox="0 0 20 18"><path d="M4.5 14.5 L15.5 3.5" stroke="#e6e6e6" stroke-width="1.5"/></svg>
<svg style="position:absolute;left:1001.5px;top:85px;" width="20" height="18" viewBox="0 0 20 18"><path d="M5 15.5 L15 5.5" stroke="#e6e6e6" stroke-width="1.5"/><path d="M4 16.5 L6 10 L10.5 14.5 Z" fill="#e6e6e6"/></svg>
<svg style="position:absolute;left:1001.5px;top:106.4px;" width="20" height="18" viewBox="0 0 20 18"><rect x="4.5" y="5" width="11" height="8" fill="none" stroke="#e6e6e6" stroke-width="1.2"/></svg>
<svg style="position:absolute;left:1001.5px;top:127.8px;" width="20" height="18" viewBox="0 0 20 18"><circle cx="8" cy="6" r="2.8" fill="none" stroke="#e6e6e6" stroke-width="1.6"/><circle cx="12.5" cy="10" r="2.8" fill="none" stroke="#e6e6e6" stroke-width="1.6"/><circle cx="8.5" cy="12.5" r="2.8" fill="none" stroke="#e6e6e6" stroke-width="1.6"/></svg>
<svg style="position:absolute;left:1001.5px;top:149px;" width="20" height="18" viewBox="0 0 20 18"><path d="M4 4 H16 V6.5 M4 4 V6.5 M10 4 V15.5 M7.5 15.5 H12.5" stroke="#e6e6e6" stroke-width="1.3" fill="none"/></svg>
<svg style="position:absolute;left:1001.5px;top:170.4px;" width="20" height="18" viewBox="0 0 20 18"><path d="M10 3.5 L15.5 8 L10.5 13 L5 8.5 Z" fill="#e6e6e6"/><path d="M5 8.5 L3.5 10.5 L6.5 14 H12" stroke="#e6e6e6" stroke-width="1.2" fill="none"/></svg>
<svg style="position:absolute;left:1001.5px;top:196.4px;" width="20" height="18" viewBox="0 0 20 18"><rect x="5" y="4" width="10" height="10" fill="#000" stroke="#e6e6e6" stroke-width="1.3"/></svg>
<svg style="position:absolute;left:1001.5px;top:217.8px;" width="20" height="18" viewBox="0 0 20 18"><rect x="4.5" y="7.5" width="11" height="3" fill="#f0f0f0"/></svg>
<svg style="position:absolute;left:1001px;top:243.5px;" width="21" height="14" viewBox="0 0 21 14"><path d="M3.5 7 L7 4.5 V9.5 Z M17.5 7 L14 4.5 V9.5 Z" fill="#e6e6e6"/><path d="M6 7 H9 M12 7 H15" stroke="#e6e6e6" stroke-width="1.3"/></svg>
</body></html>
